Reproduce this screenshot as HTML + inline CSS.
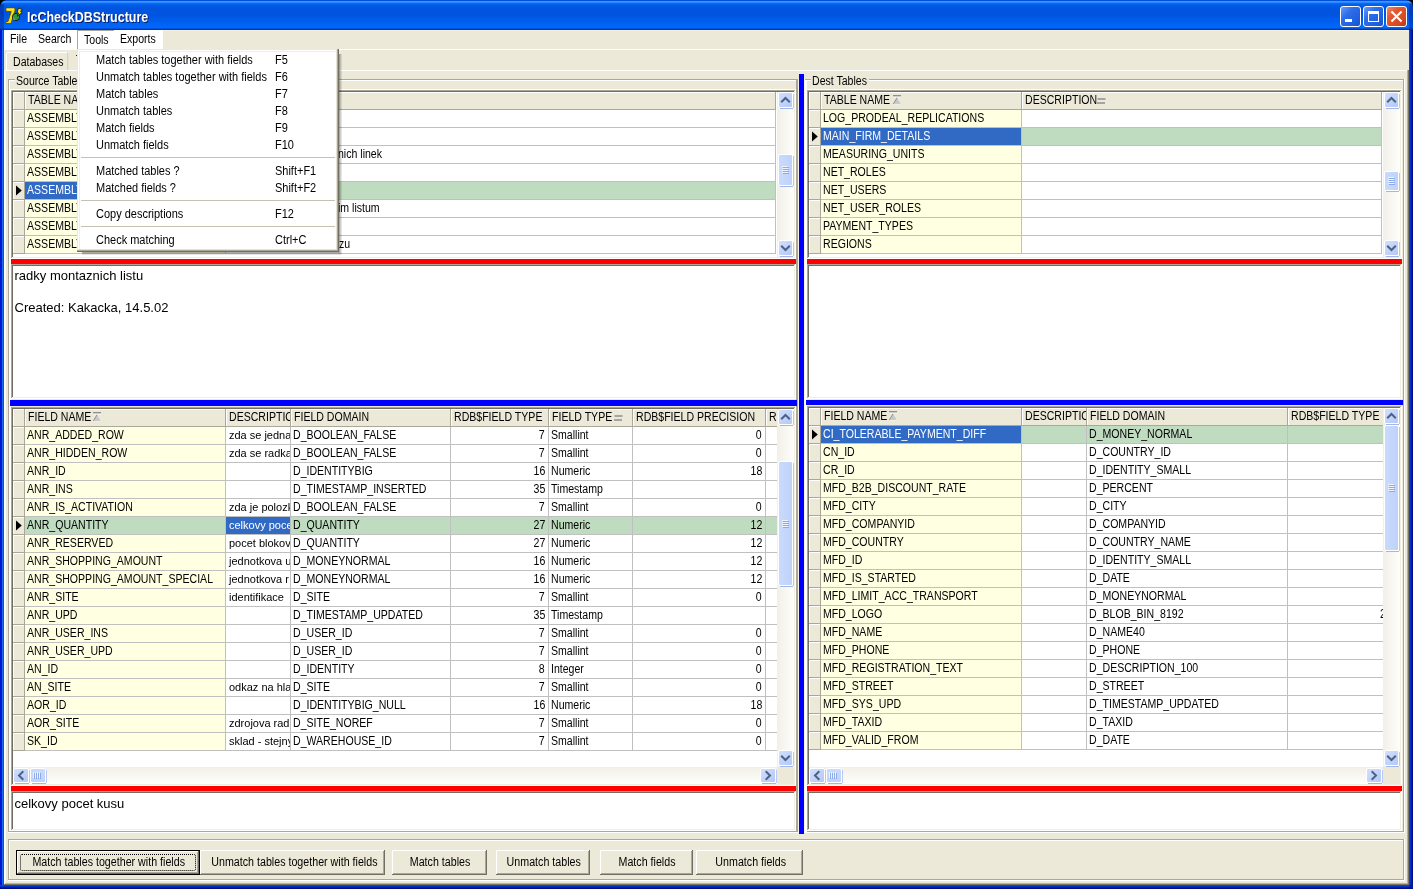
<!DOCTYPE html>
<html><head><meta charset="utf-8"><title>IcCheckDBStructure</title>
<style>
html,body{margin:0;padding:0;width:1413px;height:889px;overflow:hidden;background:#000}
body{position:relative;font-family:"Liberation Sans", sans-serif;}
div{position:absolute;box-sizing:content-box}
svg{position:absolute}
.t{white-space:pre;font-family:"Liberation Sans", sans-serif}
</style></head><body>
<div id="root" style="left:0;top:0;width:1413px;height:889px;will-change:transform">
<div style="left:0px;top:0px;width:1413px;height:10px;background:#000;"></div><div style="left:0;top:0;width:1413px;height:30px;background:linear-gradient(to bottom,#0050DC 0px,#0050DC 1px,#3D95FF 1px,#3D95FF 2px,#2A87FF 2px,#2A87FF 3px,#0A6FF8 3px,#0066F2 4px,#005DE8 5px,#0057E2 7px,#0054DE 9px,#0054DE 14px,#0058E4 17px,#005EEC 21px,#0064F4 24px,#0067FA 27px,#0067FA 28px,#0050E0 28px,#0050E0 29px,#0036C8 29px,#0036C8 30px);border-radius:7px 7px 0 0"></div><div style="left:0px;top:4px;width:4px;height:26px;background:rgba(0,20,120,0.35);"></div><div style="left:1409px;top:4px;width:4px;height:26px;background:rgba(0,20,120,0.35);"></div><div style="left:0px;top:30px;width:3px;height:859px;background:#0018D0;"></div><div style="left:2px;top:30px;width:1px;height:855px;background:#1A6AF0;"></div><div style="left:3px;top:30px;width:1px;height:855px;background:#0055E0;"></div><div style="left:1409px;top:30px;width:4px;height:859px;background:#001EA0;"></div><div style="left:1409px;top:30px;width:1px;height:855px;background:#0045F5;"></div><div style="left:1410px;top:30px;width:1px;height:855px;background:#0030D0;"></div><div style="left:1412px;top:30px;width:1px;height:859px;background:#000E80;"></div><div style="left:0px;top:885px;width:1413px;height:4px;background:#001A9A;"></div><div style="left:0px;top:885px;width:1409px;height:1px;background:#0042F2;"></div><div style="left:0px;top:886px;width:1410px;height:1px;background:#0030D0;"></div><div style="left:0px;top:888px;width:1413px;height:1px;background:#000E80;"></div><div style="left:4px;top:30px;width:1405px;height:855px;background:#ECE9D8;"></div><svg style="position:absolute;left:5px;top:7px" width="19" height="18" viewBox="0 0 19 18">
<path d="M1 1 L10 1 L10 3.5 L6 16.5 L1 16.5 L1 14.5 L3 14.5 L6.2 4.5 L1 4.5 Z" fill="#F2E20A" stroke="#6B4A00" stroke-width="0.9" stroke-linejoin="round"/>
<path d="M1.5 2 L9 2" stroke="#FFF7A0" stroke-width="0.8"/>
<circle cx="11" cy="10" r="3.6" fill="#2F9A3C" stroke="#111" stroke-width="0.9"/>
<path d="M7.6 9.5 L10.5 12.8 L8.8 13.2 Z" fill="#9A9A9A"/>
<path d="M13.5 1 L17.5 2.6 L15.4 4.2 L17 5.6 L12.2 9.2 L13.6 6.2 L12.2 5.2 Z" fill="#F5EA00" stroke="#111" stroke-width="0.8" stroke-linejoin="round"/>
</svg><div class="t" style="left:28px;top:11px;font-size:14px;line-height:14px;color:#0A1E6A;font-weight:bold;transform:scaleX(0.89);transform-origin:0 0;">IcCheckDBStructure</div><div class="t" style="left:27px;top:10px;font-size:14px;line-height:14px;color:#FFFFFF;font-weight:bold;transform:scaleX(0.89);transform-origin:0 0;">IcCheckDBStructure</div><div style="left:1340px;top:6px;width:19px;height:19px;border:1px solid #FFFFFF;border-radius:3px;background:linear-gradient(135deg,#6C9CF8 0%,#2E6EEA 35%,#1F5FDF 75%,#1650C8 100%)"></div><div style="left:1363px;top:6px;width:19px;height:19px;border:1px solid #FFFFFF;border-radius:3px;background:linear-gradient(135deg,#6C9CF8 0%,#2E6EEA 35%,#1F5FDF 75%,#1650C8 100%)"></div><div style="left:1345px;top:19px;width:7px;height:3px;background:#FFFFFF;"></div><div style="left:1368px;top:11px;width:9px;height:7px;border:1px solid #FFF;border-top:3px solid #FFF"></div><div style="left:1386px;top:6px;width:19px;height:19px;border:1px solid #FFFFFF;border-radius:3px;background:linear-gradient(135deg,#F0876A 0%,#E2572F 35%,#D44A22 75%,#B8360F 100%)"></div><svg style="position:absolute;left:1386px;top:6px" width="21" height="21" viewBox="0 0 21 21">
<path d="M6.2 6.2 L14.8 14.8 M14.8 6.2 L6.2 14.8" stroke="#FFFFFF" stroke-width="2.1" stroke-linecap="square"/></svg><div style="left:4px;top:30px;width:159px;height:20px;background:#FFFFFF;"></div><div style="left:4px;top:30px;width:1405px;height:1px;background:#F5F2E2;"></div><div style="left:4px;top:30px;width:159px;height:1px;background:#FFFFFF;"></div><div class="t" style="left:10px;top:33px;font-size:12px;line-height:12px;color:#000;transform:scaleX(0.88);transform-origin:0 0;">File</div><div class="t" style="left:38px;top:33px;font-size:12px;line-height:12px;color:#000;transform:scaleX(0.88);transform-origin:0 0;">Search</div><div style="left:77px;top:30px;width:1px;height:19px;background:#ACA899;"></div><div style="left:77px;top:30px;width:37px;height:1px;background:#ACA899;"></div><div class="t" style="left:84px;top:34px;font-size:12px;line-height:12px;color:#000;transform:scaleX(0.88);transform-origin:0 0;">Tools</div><div class="t" style="left:120px;top:33px;font-size:12px;line-height:12px;color:#000;transform:scaleX(0.88);transform-origin:0 0;">Exports</div><div style="left:4px;top:49px;width:1405px;height:1px;background:#FFFFFF;"></div><div style="left:6px;top:52px;width:62px;height:18px;background:#ECE9D8;"></div><div style="left:7px;top:52px;width:60px;height:1px;background:#FFFFFF;"></div><div style="left:6px;top:53px;width:1px;height:17px;background:#FFFFFF;"></div><div style="left:67px;top:53px;width:1px;height:17px;background:#D6D3C2;"></div><div style="left:68px;top:54px;width:1px;height:16px;background:#E4E1D0;"></div><div class="t" style="left:13px;top:56px;font-size:12px;line-height:12px;color:#000;transform:scaleX(0.88);transform-origin:0 0;">Databases</div><div style="left:76px;top:55px;width:1px;height:1px;background:#222;"></div><div style="left:4px;top:70px;width:1403px;height:1px;background:#FFFFFF;"></div><div style="left:4px;top:70px;width:1px;height:815px;background:#FFFFFF;"></div><div style="left:5px;top:71px;width:1px;height:813px;background:#F8F6EC;"></div><div style="left:1407px;top:70px;width:1px;height:814px;background:#B4B09C;"></div><div style="left:1408px;top:70px;width:1px;height:815px;background:#7C7660;"></div><div style="left:5px;top:883px;width:1403px;height:1px;background:#B4B09C;"></div><div style="left:4px;top:884px;width:1405px;height:1px;background:#7C7660;"></div><div style="left:8px;top:79px;width:789px;height:1px;background:#ACA899;"></div><div style="left:9px;top:80px;width:789px;height:1px;background:#FFFFFF;"></div><div style="left:8px;top:79px;width:1px;height:753px;background:#ACA899;"></div><div style="left:9px;top:80px;width:1px;height:753px;background:#FFFFFF;"></div><div style="left:796px;top:79px;width:1px;height:753px;background:#ACA899;"></div><div style="left:797px;top:79px;width:1px;height:754px;background:#FFFFFF;"></div><div style="left:8px;top:831px;width:789px;height:1px;background:#ACA899;"></div><div style="left:8px;top:832px;width:790px;height:1px;background:#FFFFFF;"></div><div style="left:15px;top:73px;width:70px;height:10px;background:#ECE9D8;"></div><div class="t" style="left:16px;top:75px;font-size:12px;line-height:12px;color:#000;transform:scaleX(0.88);transform-origin:0 0;">Source Tables</div><div style="left:805px;top:79px;width:599px;height:1px;background:#ACA899;"></div><div style="left:806px;top:80px;width:599px;height:1px;background:#FFFFFF;"></div><div style="left:805px;top:79px;width:1px;height:753px;background:#ACA899;"></div><div style="left:806px;top:80px;width:1px;height:753px;background:#FFFFFF;"></div><div style="left:1403px;top:79px;width:1px;height:753px;background:#ACA899;"></div><div style="left:1404px;top:79px;width:1px;height:754px;background:#FFFFFF;"></div><div style="left:805px;top:831px;width:599px;height:1px;background:#ACA899;"></div><div style="left:805px;top:832px;width:600px;height:1px;background:#FFFFFF;"></div><div style="left:811px;top:73px;width:58px;height:10px;background:#ECE9D8;"></div><div class="t" style="left:812px;top:75px;font-size:12px;line-height:12px;color:#000;transform:scaleX(0.88);transform-origin:0 0;">Dest Tables</div><div style="left:10px;top:89px;width:1px;height:742px;background:#FFFFFF;"></div><div style="left:10px;top:89px;width:786px;height:1px;background:#FFFFFF;"></div><div style="left:806px;top:89px;width:596px;height:1px;background:#FFFFFF;"></div><div style="left:797px;top:79px;width:1px;height:753px;background:#ACA899;"></div><div style="left:798px;top:79px;width:1px;height:754px;background:#F6F4E8;"></div><div style="left:804px;top:79px;width:1px;height:754px;background:#F6F4E8;"></div><div style="left:805px;top:80px;width:2px;height:752px;background:#FFFFFF;"></div><div style="left:799px;top:74px;width:5px;height:760px;background:#0000FF;"></div><div style="left:11px;top:259px;width:785px;height:5px;background:#FF0000;"></div><div style="left:807px;top:259px;width:595px;height:5px;background:#FF0000;"></div><div style="left:10px;top:400px;width:787px;height:6px;background:#0000FF;"></div><div style="left:806px;top:400px;width:597px;height:5px;background:#0000FF;"></div><div style="left:11px;top:786px;width:785px;height:5px;background:#FF0000;"></div><div style="left:807px;top:786px;width:595px;height:5px;background:#FF0000;"></div><div style="left:11px;top:90px;width:785px;height:169px;background:#FFFFFF;"></div><div style="left:11px;top:90px;width:784px;height:1px;background:#ACA899;"></div><div style="left:11px;top:90px;width:1px;height:168px;background:#ACA899;"></div><div style="left:12px;top:91px;width:782px;height:1px;background:#716F64;"></div><div style="left:12px;top:91px;width:1px;height:166px;background:#716F64;"></div><div style="left:794px;top:91px;width:1px;height:167px;background:#F1EFE2;"></div><div style="left:12px;top:257px;width:783px;height:1px;background:#F1EFE2;"></div><div style="left:795px;top:90px;width:1px;height:169px;background:#FFFFFF;"></div><div style="left:11px;top:258px;width:785px;height:1px;background:#FFFFFF;"></div><div style="left:13px;top:92px;width:764px;height:165px;overflow:hidden"><div style="left:0px;top:0px;width:12px;height:18px;background:#ECE9D8;"></div><div style="left:0px;top:0px;width:12px;height:1px;background:#FFFFFF;"></div><div style="left:0px;top:0px;width:1px;height:18px;background:#FFFFFF;"></div><div style="left:11px;top:0px;width:1px;height:18px;background:#ACA899;"></div><div style="left:0px;top:17px;width:12px;height:1px;background:#ACA899;"></div><div style="left:12px;top:0px;width:201px;height:18px;background:#ECE9D8;"></div><div style="left:12px;top:0px;width:201px;height:1px;background:#FFFFFF;"></div><div style="left:12px;top:0px;width:1px;height:17px;background:#FFFFFF;"></div><div style="left:212px;top:0px;width:1px;height:18px;background:#ACA899;"></div><div style="left:12px;top:17px;width:201px;height:1px;background:#ACA899;"></div><div style="left:213px;top:0px;width:591px;height:18px;background:#ECE9D8;"></div><div style="left:213px;top:0px;width:591px;height:1px;background:#FFFFFF;"></div><div style="left:213px;top:0px;width:1px;height:17px;background:#FFFFFF;"></div><div style="left:762px;top:0px;width:1px;height:18px;background:#ACA899;"></div><div style="left:763px;top:0px;width:1px;height:18px;background:#FFFFFF;"></div><div style="left:213px;top:17px;width:550px;height:1px;background:#ACA899;"></div><div style="left:12px;top:0px;width:200px;height:17px;overflow:hidden"><div class="t" style="left:2.5px;top:2px;font-size:12px;line-height:12px;color:#000;transform:scaleX(0.88);transform-origin:0 0;">TABLE NAME</div><svg style="position:absolute;left:68px;top:3px" width="9" height="10" viewBox="0 0 9 10"><rect x="0" y="0" width="8" height="1.6" fill="#8E8E8E"/><rect x="0" y="1.6" width="8" height="0.8" fill="#FFFFFF"/><path d="M4 2.8 L7.8 9.2 L0.2 9.2 Z" fill="#C8C8C8"/><path d="M4 2.8 L0.2 9.2" stroke="#888" stroke-width="0.9"/><path d="M0.2 9.4 L7.8 9.4" stroke="#F4F4F4" stroke-width="0.8"/></svg></div><div style="left:213px;top:0px;width:590px;height:17px;overflow:hidden"><div class="t" style="left:2.5px;top:2px;font-size:12px;line-height:12px;color:#000;transform:scaleX(0.88);transform-origin:0 0;">DESCRIPTION</div></div><div style="left:0px;top:18px;width:12px;height:18px;background:#ECE9D8;"></div><div style="left:0px;top:18px;width:11px;height:1px;background:#FFFFFF;"></div><div style="left:0px;top:18px;width:1px;height:17px;background:#FFFFFF;"></div><div style="left:11px;top:18px;width:1px;height:18px;background:#ACA899;"></div><div style="left:0px;top:35px;width:12px;height:1px;background:#ACA899;"></div><div style="left:12px;top:18px;width:200px;height:17px;background:#FFFFE1;"></div><div style="left:12px;top:18px;width:200px;height:17px;overflow:hidden"><div class="t" style="left:2px;top:2px;font-size:12px;line-height:12px;color:#000;transform:scaleX(0.88);transform-origin:0 0;">ASSEMBLY_LINES</div></div><div style="left:213px;top:18px;width:549px;height:17px;background:#FFFFFF;"></div><div style="left:763px;top:18px;width:1px;height:17px;background:#FFFFFF;"></div><div style="left:762px;top:18px;width:1px;height:18px;background:#C0C0C0;"></div><div style="left:12px;top:35px;width:751px;height:1px;background:#C0C0C0;"></div><div style="left:212px;top:18px;width:1px;height:18px;background:#C0C0C0;"></div><div style="left:0px;top:36px;width:12px;height:18px;background:#ECE9D8;"></div><div style="left:0px;top:36px;width:11px;height:1px;background:#FFFFFF;"></div><div style="left:0px;top:36px;width:1px;height:17px;background:#FFFFFF;"></div><div style="left:11px;top:36px;width:1px;height:18px;background:#ACA899;"></div><div style="left:0px;top:53px;width:12px;height:1px;background:#ACA899;"></div><div style="left:12px;top:36px;width:200px;height:17px;background:#FFFFE1;"></div><div style="left:12px;top:36px;width:200px;height:17px;overflow:hidden"><div class="t" style="left:2px;top:2px;font-size:12px;line-height:12px;color:#000;transform:scaleX(0.88);transform-origin:0 0;">ASSEMBLY_LIST</div></div><div style="left:213px;top:36px;width:549px;height:17px;background:#FFFFFF;"></div><div style="left:763px;top:36px;width:1px;height:17px;background:#FFFFFF;"></div><div style="left:762px;top:36px;width:1px;height:18px;background:#C0C0C0;"></div><div style="left:12px;top:53px;width:751px;height:1px;background:#C0C0C0;"></div><div style="left:212px;top:36px;width:1px;height:18px;background:#C0C0C0;"></div><div style="left:0px;top:54px;width:12px;height:18px;background:#ECE9D8;"></div><div style="left:0px;top:54px;width:11px;height:1px;background:#FFFFFF;"></div><div style="left:0px;top:54px;width:1px;height:17px;background:#FFFFFF;"></div><div style="left:11px;top:54px;width:1px;height:18px;background:#ACA899;"></div><div style="left:0px;top:71px;width:12px;height:1px;background:#ACA899;"></div><div style="left:12px;top:54px;width:200px;height:17px;background:#FFFFE1;"></div><div style="left:12px;top:54px;width:200px;height:17px;overflow:hidden"><div class="t" style="left:2px;top:2px;font-size:12px;line-height:12px;color:#000;transform:scaleX(0.88);transform-origin:0 0;">ASSEMBLY_LIST_LINES</div></div><div style="left:213px;top:54px;width:549px;height:17px;background:#FFFFFF;"></div><div style="left:763px;top:54px;width:1px;height:17px;background:#FFFFFF;"></div><div style="left:762px;top:54px;width:1px;height:18px;background:#C0C0C0;"></div><div class="t" style="left:325px;top:56px;font-size:12px;line-height:12px;color:#000;transform:scaleX(0.88);transform-origin:0 0;">nich linek</div><div style="left:12px;top:71px;width:751px;height:1px;background:#C0C0C0;"></div><div style="left:212px;top:54px;width:1px;height:18px;background:#C0C0C0;"></div><div style="left:0px;top:72px;width:12px;height:18px;background:#ECE9D8;"></div><div style="left:0px;top:72px;width:11px;height:1px;background:#FFFFFF;"></div><div style="left:0px;top:72px;width:1px;height:17px;background:#FFFFFF;"></div><div style="left:11px;top:72px;width:1px;height:18px;background:#ACA899;"></div><div style="left:0px;top:89px;width:12px;height:1px;background:#ACA899;"></div><div style="left:12px;top:72px;width:200px;height:17px;background:#FFFFE1;"></div><div style="left:12px;top:72px;width:200px;height:17px;overflow:hidden"><div class="t" style="left:2px;top:2px;font-size:12px;line-height:12px;color:#000;transform:scaleX(0.88);transform-origin:0 0;">ASSEMBLY_LIST_LINES_D</div></div><div style="left:213px;top:72px;width:549px;height:17px;background:#FFFFFF;"></div><div style="left:763px;top:72px;width:1px;height:17px;background:#FFFFFF;"></div><div style="left:762px;top:72px;width:1px;height:18px;background:#C0C0C0;"></div><div style="left:12px;top:89px;width:751px;height:1px;background:#C0C0C0;"></div><div style="left:212px;top:72px;width:1px;height:18px;background:#C0C0C0;"></div><div style="left:0px;top:90px;width:12px;height:18px;background:#ECE9D8;"></div><div style="left:0px;top:90px;width:11px;height:1px;background:#FFFFFF;"></div><div style="left:0px;top:90px;width:1px;height:17px;background:#FFFFFF;"></div><div style="left:11px;top:90px;width:1px;height:18px;background:#ACA899;"></div><div style="left:0px;top:107px;width:12px;height:1px;background:#ACA899;"></div><svg style="position:absolute;left:3px;top:93px" width="7" height="12" viewBox="0 0 7 12"><path d="M0 0.5 L5.8 5.5 L0 10.5 Z" fill="#000"/></svg><div style="left:12px;top:90px;width:200px;height:17px;background:#316AC5;"></div><div style="left:12px;top:90px;width:200px;height:17px;overflow:hidden"><div class="t" style="left:2px;top:2px;font-size:12px;line-height:12px;color:#FFFFFF;transform:scaleX(0.88);transform-origin:0 0;">ASSEMBLY_LIST_ROWS</div></div><div style="left:213px;top:90px;width:549px;height:17px;background:#C0DCC0;"></div><div style="left:763px;top:90px;width:1px;height:17px;background:#FFFFFF;"></div><div style="left:762px;top:90px;width:1px;height:18px;background:#C0C0C0;"></div><div style="left:213px;top:90px;width:590px;height:17px;overflow:hidden"><div class="t" style="left:2px;top:2px;font-size:12px;line-height:12px;color:#000;transform:scaleX(0.88);transform-origin:0 0;">radky montaznich listu</div></div><div style="left:12px;top:107px;width:751px;height:1px;background:#C0C0C0;"></div><div style="left:212px;top:90px;width:1px;height:18px;background:#C0C0C0;"></div><div style="left:0px;top:108px;width:12px;height:18px;background:#ECE9D8;"></div><div style="left:0px;top:108px;width:11px;height:1px;background:#FFFFFF;"></div><div style="left:0px;top:108px;width:1px;height:17px;background:#FFFFFF;"></div><div style="left:11px;top:108px;width:1px;height:18px;background:#ACA899;"></div><div style="left:0px;top:125px;width:12px;height:1px;background:#ACA899;"></div><div style="left:12px;top:108px;width:200px;height:17px;background:#FFFFE1;"></div><div style="left:12px;top:108px;width:200px;height:17px;overflow:hidden"><div class="t" style="left:2px;top:2px;font-size:12px;line-height:12px;color:#000;transform:scaleX(0.88);transform-origin:0 0;">ASSEMBLY_LIST_STATES</div></div><div style="left:213px;top:108px;width:549px;height:17px;background:#FFFFFF;"></div><div style="left:763px;top:108px;width:1px;height:17px;background:#FFFFFF;"></div><div style="left:762px;top:108px;width:1px;height:18px;background:#C0C0C0;"></div><div class="t" style="left:325px;top:110px;font-size:12px;line-height:12px;color:#000;transform:scaleX(0.88);transform-origin:0 0;">im listum</div><div style="left:12px;top:125px;width:751px;height:1px;background:#C0C0C0;"></div><div style="left:212px;top:108px;width:1px;height:18px;background:#C0C0C0;"></div><div style="left:0px;top:126px;width:12px;height:18px;background:#ECE9D8;"></div><div style="left:0px;top:126px;width:11px;height:1px;background:#FFFFFF;"></div><div style="left:0px;top:126px;width:1px;height:17px;background:#FFFFFF;"></div><div style="left:11px;top:126px;width:1px;height:18px;background:#ACA899;"></div><div style="left:0px;top:143px;width:12px;height:1px;background:#ACA899;"></div><div style="left:12px;top:126px;width:200px;height:17px;background:#FFFFE1;"></div><div style="left:12px;top:126px;width:200px;height:17px;overflow:hidden"><div class="t" style="left:2px;top:2px;font-size:12px;line-height:12px;color:#000;transform:scaleX(0.88);transform-origin:0 0;">ASSEMBLY_ORDERS</div></div><div style="left:213px;top:126px;width:549px;height:17px;background:#FFFFFF;"></div><div style="left:763px;top:126px;width:1px;height:17px;background:#FFFFFF;"></div><div style="left:762px;top:126px;width:1px;height:18px;background:#C0C0C0;"></div><div style="left:12px;top:143px;width:751px;height:1px;background:#C0C0C0;"></div><div style="left:212px;top:126px;width:1px;height:18px;background:#C0C0C0;"></div><div style="left:0px;top:144px;width:12px;height:18px;background:#ECE9D8;"></div><div style="left:0px;top:144px;width:11px;height:1px;background:#FFFFFF;"></div><div style="left:0px;top:144px;width:1px;height:17px;background:#FFFFFF;"></div><div style="left:11px;top:144px;width:1px;height:18px;background:#ACA899;"></div><div style="left:0px;top:161px;width:12px;height:1px;background:#ACA899;"></div><div style="left:12px;top:144px;width:200px;height:17px;background:#FFFFE1;"></div><div style="left:12px;top:144px;width:200px;height:17px;overflow:hidden"><div class="t" style="left:2px;top:2px;font-size:12px;line-height:12px;color:#000;transform:scaleX(0.88);transform-origin:0 0;">ASSEMBLY_ORDERS_ROWS</div></div><div style="left:213px;top:144px;width:549px;height:17px;background:#FFFFFF;"></div><div style="left:763px;top:144px;width:1px;height:17px;background:#FFFFFF;"></div><div style="left:762px;top:144px;width:1px;height:18px;background:#C0C0C0;"></div><div class="t" style="left:326px;top:146px;font-size:12px;line-height:12px;color:#000;transform:scaleX(0.88);transform-origin:0 0;">zu</div><div style="left:12px;top:161px;width:751px;height:1px;background:#C0C0C0;"></div><div style="left:212px;top:144px;width:1px;height:18px;background:#C0C0C0;"></div></div><div style="left:777px;top:92px;width:17px;height:165px;background:linear-gradient(90deg,#F1EFE8,#FEFEFB)"></div><div style="left:778px;top:92px;width:13px;height:14px;border:1px solid #FFFFFF;border-radius:2px;background:linear-gradient(135deg,#D3DFFD 0%,#C4D5FB 45%,#B3C8F5 100%)"></div><div style="left:780px;top:108px;width:13px;height:1px;background:#A2B7E8;"></div><div style="left:793px;top:94px;width:1px;height:14px;background:#B9CAF0;"></div><svg style="position:absolute;left:0;top:0;overflow:visible" width="1" height="1"><path d="M781.2 102.3 L785.5 98.0 L789.8 102.3" stroke="#4D6185" stroke-width="2.0" fill="none"/></svg><div style="left:778px;top:240px;width:13px;height:14px;border:1px solid #FFFFFF;border-radius:2px;background:linear-gradient(135deg,#D3DFFD 0%,#C4D5FB 45%,#B3C8F5 100%)"></div><div style="left:780px;top:256px;width:13px;height:1px;background:#A2B7E8;"></div><div style="left:793px;top:242px;width:1px;height:14px;background:#B9CAF0;"></div><svg style="position:absolute;left:0;top:0;overflow:visible" width="1" height="1"><path d="M781.2 245.7 L785.5 250.0 L789.8 245.7" stroke="#4D6185" stroke-width="2.0" fill="none"/></svg><div style="left:778px;top:154px;width:13px;height:30px;border:1px solid #FFFFFF;border-radius:2px;background:linear-gradient(90deg,#CADAFD,#BED2FA)"></div><div style="left:780px;top:186px;width:13px;height:1px;background:#A2B7E8;"></div><div style="left:793px;top:156px;width:1px;height:30px;background:#B9CAF0;"></div><div style="left:782px;top:166px;width:6px;height:1px;background:#EEF3FE;"></div><div style="left:783px;top:167px;width:6px;height:1px;background:#8CA9E8;"></div><div style="left:782px;top:168px;width:6px;height:1px;background:#EEF3FE;"></div><div style="left:783px;top:169px;width:6px;height:1px;background:#8CA9E8;"></div><div style="left:782px;top:170px;width:6px;height:1px;background:#EEF3FE;"></div><div style="left:783px;top:171px;width:6px;height:1px;background:#8CA9E8;"></div><div style="left:782px;top:172px;width:6px;height:1px;background:#EEF3FE;"></div><div style="left:783px;top:173px;width:6px;height:1px;background:#8CA9E8;"></div><div style="left:807px;top:90px;width:595px;height:169px;background:#FFFFFF;"></div><div style="left:807px;top:90px;width:594px;height:1px;background:#ACA899;"></div><div style="left:807px;top:90px;width:1px;height:168px;background:#ACA899;"></div><div style="left:808px;top:91px;width:592px;height:1px;background:#716F64;"></div><div style="left:808px;top:91px;width:1px;height:166px;background:#716F64;"></div><div style="left:1400px;top:91px;width:1px;height:167px;background:#F1EFE2;"></div><div style="left:808px;top:257px;width:593px;height:1px;background:#F1EFE2;"></div><div style="left:1401px;top:90px;width:1px;height:169px;background:#FFFFFF;"></div><div style="left:807px;top:258px;width:595px;height:1px;background:#FFFFFF;"></div><div style="left:809px;top:92px;width:574px;height:165px;overflow:hidden"><div style="left:0px;top:0px;width:12px;height:18px;background:#ECE9D8;"></div><div style="left:0px;top:0px;width:12px;height:1px;background:#FFFFFF;"></div><div style="left:0px;top:0px;width:1px;height:18px;background:#FFFFFF;"></div><div style="left:11px;top:0px;width:1px;height:18px;background:#ACA899;"></div><div style="left:0px;top:17px;width:12px;height:1px;background:#ACA899;"></div><div style="left:12px;top:0px;width:201px;height:18px;background:#ECE9D8;"></div><div style="left:12px;top:0px;width:201px;height:1px;background:#FFFFFF;"></div><div style="left:12px;top:0px;width:1px;height:17px;background:#FFFFFF;"></div><div style="left:212px;top:0px;width:1px;height:18px;background:#ACA899;"></div><div style="left:12px;top:17px;width:201px;height:1px;background:#ACA899;"></div><div style="left:213px;top:0px;width:401px;height:18px;background:#ECE9D8;"></div><div style="left:213px;top:0px;width:401px;height:1px;background:#FFFFFF;"></div><div style="left:213px;top:0px;width:1px;height:17px;background:#FFFFFF;"></div><div style="left:572px;top:0px;width:1px;height:18px;background:#ACA899;"></div><div style="left:573px;top:0px;width:1px;height:18px;background:#FFFFFF;"></div><div style="left:213px;top:17px;width:360px;height:1px;background:#ACA899;"></div><div style="left:12px;top:0px;width:200px;height:17px;overflow:hidden"><div class="t" style="left:2.5px;top:2px;font-size:12px;line-height:12px;color:#000;transform:scaleX(0.88);transform-origin:0 0;">TABLE NAME</div><svg style="position:absolute;left:72px;top:3px" width="9" height="10" viewBox="0 0 9 10"><rect x="0" y="0" width="8" height="1.6" fill="#8E8E8E"/><rect x="0" y="1.6" width="8" height="0.8" fill="#FFFFFF"/><path d="M4 2.8 L7.8 9.2 L0.2 9.2 Z" fill="#C8C8C8"/><path d="M4 2.8 L0.2 9.2" stroke="#888" stroke-width="0.9"/><path d="M0.2 9.4 L7.8 9.4" stroke="#F4F4F4" stroke-width="0.8"/></svg></div><div style="left:213px;top:0px;width:400px;height:17px;overflow:hidden"><div class="t" style="left:2.5px;top:2px;font-size:12px;line-height:12px;color:#000;transform:scaleX(0.88);transform-origin:0 0;">DESCRIPTION</div><svg style="position:absolute;left:75px;top:5px" width="9" height="8" viewBox="0 0 9 8"><rect x="0.5" y="1" width="8" height="2" fill="#A4A4A4"/><rect x="0" y="5" width="8" height="2" fill="#A4A4A4"/></svg></div><div style="left:0px;top:18px;width:12px;height:18px;background:#ECE9D8;"></div><div style="left:0px;top:18px;width:11px;height:1px;background:#FFFFFF;"></div><div style="left:0px;top:18px;width:1px;height:17px;background:#FFFFFF;"></div><div style="left:11px;top:18px;width:1px;height:18px;background:#ACA899;"></div><div style="left:0px;top:35px;width:12px;height:1px;background:#ACA899;"></div><div style="left:12px;top:18px;width:200px;height:17px;background:#FFFFE1;"></div><div style="left:12px;top:18px;width:200px;height:17px;overflow:hidden"><div class="t" style="left:2px;top:2px;font-size:12px;line-height:12px;color:#000;transform:scaleX(0.88);transform-origin:0 0;">LOG_PRODEAL_REPLICATIONS</div></div><div style="left:213px;top:18px;width:359px;height:17px;background:#FFFFFF;"></div><div style="left:573px;top:18px;width:1px;height:17px;background:#FFFFFF;"></div><div style="left:572px;top:18px;width:1px;height:18px;background:#C0C0C0;"></div><div style="left:12px;top:35px;width:561px;height:1px;background:#C0C0C0;"></div><div style="left:212px;top:18px;width:1px;height:18px;background:#C0C0C0;"></div><div style="left:0px;top:36px;width:12px;height:18px;background:#ECE9D8;"></div><div style="left:0px;top:36px;width:11px;height:1px;background:#FFFFFF;"></div><div style="left:0px;top:36px;width:1px;height:17px;background:#FFFFFF;"></div><div style="left:11px;top:36px;width:1px;height:18px;background:#ACA899;"></div><div style="left:0px;top:53px;width:12px;height:1px;background:#ACA899;"></div><svg style="position:absolute;left:3px;top:39px" width="7" height="12" viewBox="0 0 7 12"><path d="M0 0.5 L5.8 5.5 L0 10.5 Z" fill="#000"/></svg><div style="left:12px;top:36px;width:200px;height:17px;background:#316AC5;"></div><div style="left:12px;top:36px;width:200px;height:17px;overflow:hidden"><div class="t" style="left:2px;top:2px;font-size:12px;line-height:12px;color:#FFFFFF;transform:scaleX(0.88);transform-origin:0 0;">MAIN_FIRM_DETAILS</div></div><div style="left:213px;top:36px;width:359px;height:17px;background:#C0DCC0;"></div><div style="left:573px;top:36px;width:1px;height:17px;background:#FFFFFF;"></div><div style="left:572px;top:36px;width:1px;height:18px;background:#C0C0C0;"></div><div style="left:12px;top:53px;width:561px;height:1px;background:#C0C0C0;"></div><div style="left:212px;top:36px;width:1px;height:18px;background:#C0C0C0;"></div><div style="left:0px;top:54px;width:12px;height:18px;background:#ECE9D8;"></div><div style="left:0px;top:54px;width:11px;height:1px;background:#FFFFFF;"></div><div style="left:0px;top:54px;width:1px;height:17px;background:#FFFFFF;"></div><div style="left:11px;top:54px;width:1px;height:18px;background:#ACA899;"></div><div style="left:0px;top:71px;width:12px;height:1px;background:#ACA899;"></div><div style="left:12px;top:54px;width:200px;height:17px;background:#FFFFE1;"></div><div style="left:12px;top:54px;width:200px;height:17px;overflow:hidden"><div class="t" style="left:2px;top:2px;font-size:12px;line-height:12px;color:#000;transform:scaleX(0.88);transform-origin:0 0;">MEASURING_UNITS</div></div><div style="left:213px;top:54px;width:359px;height:17px;background:#FFFFFF;"></div><div style="left:573px;top:54px;width:1px;height:17px;background:#FFFFFF;"></div><div style="left:572px;top:54px;width:1px;height:18px;background:#C0C0C0;"></div><div style="left:12px;top:71px;width:561px;height:1px;background:#C0C0C0;"></div><div style="left:212px;top:54px;width:1px;height:18px;background:#C0C0C0;"></div><div style="left:0px;top:72px;width:12px;height:18px;background:#ECE9D8;"></div><div style="left:0px;top:72px;width:11px;height:1px;background:#FFFFFF;"></div><div style="left:0px;top:72px;width:1px;height:17px;background:#FFFFFF;"></div><div style="left:11px;top:72px;width:1px;height:18px;background:#ACA899;"></div><div style="left:0px;top:89px;width:12px;height:1px;background:#ACA899;"></div><div style="left:12px;top:72px;width:200px;height:17px;background:#FFFFE1;"></div><div style="left:12px;top:72px;width:200px;height:17px;overflow:hidden"><div class="t" style="left:2px;top:2px;font-size:12px;line-height:12px;color:#000;transform:scaleX(0.88);transform-origin:0 0;">NET_ROLES</div></div><div style="left:213px;top:72px;width:359px;height:17px;background:#FFFFFF;"></div><div style="left:573px;top:72px;width:1px;height:17px;background:#FFFFFF;"></div><div style="left:572px;top:72px;width:1px;height:18px;background:#C0C0C0;"></div><div style="left:12px;top:89px;width:561px;height:1px;background:#C0C0C0;"></div><div style="left:212px;top:72px;width:1px;height:18px;background:#C0C0C0;"></div><div style="left:0px;top:90px;width:12px;height:18px;background:#ECE9D8;"></div><div style="left:0px;top:90px;width:11px;height:1px;background:#FFFFFF;"></div><div style="left:0px;top:90px;width:1px;height:17px;background:#FFFFFF;"></div><div style="left:11px;top:90px;width:1px;height:18px;background:#ACA899;"></div><div style="left:0px;top:107px;width:12px;height:1px;background:#ACA899;"></div><div style="left:12px;top:90px;width:200px;height:17px;background:#FFFFE1;"></div><div style="left:12px;top:90px;width:200px;height:17px;overflow:hidden"><div class="t" style="left:2px;top:2px;font-size:12px;line-height:12px;color:#000;transform:scaleX(0.88);transform-origin:0 0;">NET_USERS</div></div><div style="left:213px;top:90px;width:359px;height:17px;background:#FFFFFF;"></div><div style="left:573px;top:90px;width:1px;height:17px;background:#FFFFFF;"></div><div style="left:572px;top:90px;width:1px;height:18px;background:#C0C0C0;"></div><div style="left:12px;top:107px;width:561px;height:1px;background:#C0C0C0;"></div><div style="left:212px;top:90px;width:1px;height:18px;background:#C0C0C0;"></div><div style="left:0px;top:108px;width:12px;height:18px;background:#ECE9D8;"></div><div style="left:0px;top:108px;width:11px;height:1px;background:#FFFFFF;"></div><div style="left:0px;top:108px;width:1px;height:17px;background:#FFFFFF;"></div><div style="left:11px;top:108px;width:1px;height:18px;background:#ACA899;"></div><div style="left:0px;top:125px;width:12px;height:1px;background:#ACA899;"></div><div style="left:12px;top:108px;width:200px;height:17px;background:#FFFFE1;"></div><div style="left:12px;top:108px;width:200px;height:17px;overflow:hidden"><div class="t" style="left:2px;top:2px;font-size:12px;line-height:12px;color:#000;transform:scaleX(0.88);transform-origin:0 0;">NET_USER_ROLES</div></div><div style="left:213px;top:108px;width:359px;height:17px;background:#FFFFFF;"></div><div style="left:573px;top:108px;width:1px;height:17px;background:#FFFFFF;"></div><div style="left:572px;top:108px;width:1px;height:18px;background:#C0C0C0;"></div><div style="left:12px;top:125px;width:561px;height:1px;background:#C0C0C0;"></div><div style="left:212px;top:108px;width:1px;height:18px;background:#C0C0C0;"></div><div style="left:0px;top:126px;width:12px;height:18px;background:#ECE9D8;"></div><div style="left:0px;top:126px;width:11px;height:1px;background:#FFFFFF;"></div><div style="left:0px;top:126px;width:1px;height:17px;background:#FFFFFF;"></div><div style="left:11px;top:126px;width:1px;height:18px;background:#ACA899;"></div><div style="left:0px;top:143px;width:12px;height:1px;background:#ACA899;"></div><div style="left:12px;top:126px;width:200px;height:17px;background:#FFFFE1;"></div><div style="left:12px;top:126px;width:200px;height:17px;overflow:hidden"><div class="t" style="left:2px;top:2px;font-size:12px;line-height:12px;color:#000;transform:scaleX(0.88);transform-origin:0 0;">PAYMENT_TYPES</div></div><div style="left:213px;top:126px;width:359px;height:17px;background:#FFFFFF;"></div><div style="left:573px;top:126px;width:1px;height:17px;background:#FFFFFF;"></div><div style="left:572px;top:126px;width:1px;height:18px;background:#C0C0C0;"></div><div style="left:12px;top:143px;width:561px;height:1px;background:#C0C0C0;"></div><div style="left:212px;top:126px;width:1px;height:18px;background:#C0C0C0;"></div><div style="left:0px;top:144px;width:12px;height:18px;background:#ECE9D8;"></div><div style="left:0px;top:144px;width:11px;height:1px;background:#FFFFFF;"></div><div style="left:0px;top:144px;width:1px;height:17px;background:#FFFFFF;"></div><div style="left:11px;top:144px;width:1px;height:18px;background:#ACA899;"></div><div style="left:0px;top:161px;width:12px;height:1px;background:#ACA899;"></div><div style="left:12px;top:144px;width:200px;height:17px;background:#FFFFE1;"></div><div style="left:12px;top:144px;width:200px;height:17px;overflow:hidden"><div class="t" style="left:2px;top:2px;font-size:12px;line-height:12px;color:#000;transform:scaleX(0.88);transform-origin:0 0;">REGIONS</div></div><div style="left:213px;top:144px;width:359px;height:17px;background:#FFFFFF;"></div><div style="left:573px;top:144px;width:1px;height:17px;background:#FFFFFF;"></div><div style="left:572px;top:144px;width:1px;height:18px;background:#C0C0C0;"></div><div style="left:12px;top:161px;width:561px;height:1px;background:#C0C0C0;"></div><div style="left:212px;top:144px;width:1px;height:18px;background:#C0C0C0;"></div></div><div style="left:1383px;top:92px;width:17px;height:165px;background:linear-gradient(90deg,#F1EFE8,#FEFEFB)"></div><div style="left:1384px;top:92px;width:13px;height:14px;border:1px solid #FFFFFF;border-radius:2px;background:linear-gradient(135deg,#D3DFFD 0%,#C4D5FB 45%,#B3C8F5 100%)"></div><div style="left:1386px;top:108px;width:13px;height:1px;background:#A2B7E8;"></div><div style="left:1399px;top:94px;width:1px;height:14px;background:#B9CAF0;"></div><svg style="position:absolute;left:0;top:0;overflow:visible" width="1" height="1"><path d="M1387.2 102.3 L1391.5 98.0 L1395.8 102.3" stroke="#4D6185" stroke-width="2.0" fill="none"/></svg><div style="left:1384px;top:240px;width:13px;height:14px;border:1px solid #FFFFFF;border-radius:2px;background:linear-gradient(135deg,#D3DFFD 0%,#C4D5FB 45%,#B3C8F5 100%)"></div><div style="left:1386px;top:256px;width:13px;height:1px;background:#A2B7E8;"></div><div style="left:1399px;top:242px;width:1px;height:14px;background:#B9CAF0;"></div><svg style="position:absolute;left:0;top:0;overflow:visible" width="1" height="1"><path d="M1387.2 245.7 L1391.5 250.0 L1395.8 245.7" stroke="#4D6185" stroke-width="2.0" fill="none"/></svg><div style="left:1384px;top:171px;width:13px;height:18px;border:1px solid #FFFFFF;border-radius:2px;background:linear-gradient(90deg,#CADAFD,#BED2FA)"></div><div style="left:1386px;top:191px;width:13px;height:1px;background:#A2B7E8;"></div><div style="left:1399px;top:173px;width:1px;height:18px;background:#B9CAF0;"></div><div style="left:1388px;top:177px;width:6px;height:1px;background:#EEF3FE;"></div><div style="left:1389px;top:178px;width:6px;height:1px;background:#8CA9E8;"></div><div style="left:1388px;top:179px;width:6px;height:1px;background:#EEF3FE;"></div><div style="left:1389px;top:180px;width:6px;height:1px;background:#8CA9E8;"></div><div style="left:1388px;top:181px;width:6px;height:1px;background:#EEF3FE;"></div><div style="left:1389px;top:182px;width:6px;height:1px;background:#8CA9E8;"></div><div style="left:1388px;top:183px;width:6px;height:1px;background:#EEF3FE;"></div><div style="left:1389px;top:184px;width:6px;height:1px;background:#8CA9E8;"></div><div style="left:11px;top:264px;width:785px;height:135px;background:#FFFFFF;"></div><div style="left:11px;top:264px;width:784px;height:1px;background:#ACA899;"></div><div style="left:11px;top:264px;width:1px;height:134px;background:#ACA899;"></div><div style="left:12px;top:265px;width:782px;height:1px;background:#716F64;"></div><div style="left:12px;top:265px;width:1px;height:132px;background:#716F64;"></div><div style="left:794px;top:265px;width:1px;height:133px;background:#F1EFE2;"></div><div style="left:12px;top:397px;width:783px;height:1px;background:#F1EFE2;"></div><div style="left:795px;top:264px;width:1px;height:135px;background:#FFFFFF;"></div><div style="left:11px;top:398px;width:785px;height:1px;background:#FFFFFF;"></div><div class="t" style="left:14.5px;top:269px;font-size:13px;line-height:13px;color:#000;">radky montaznich listu</div><div class="t" style="left:14.5px;top:301px;font-size:13px;line-height:13px;color:#000;">Created: Kakacka, 14.5.02</div><div style="left:807px;top:264px;width:595px;height:135px;background:#FFFFFF;"></div><div style="left:807px;top:264px;width:594px;height:1px;background:#ACA899;"></div><div style="left:807px;top:264px;width:1px;height:134px;background:#ACA899;"></div><div style="left:808px;top:265px;width:592px;height:1px;background:#716F64;"></div><div style="left:808px;top:265px;width:1px;height:132px;background:#716F64;"></div><div style="left:1400px;top:265px;width:1px;height:133px;background:#F1EFE2;"></div><div style="left:808px;top:397px;width:593px;height:1px;background:#F1EFE2;"></div><div style="left:1401px;top:264px;width:1px;height:135px;background:#FFFFFF;"></div><div style="left:807px;top:398px;width:595px;height:1px;background:#FFFFFF;"></div><div style="left:11px;top:407px;width:785px;height:379px;background:#FFFFFF;"></div><div style="left:11px;top:407px;width:784px;height:1px;background:#ACA899;"></div><div style="left:11px;top:407px;width:1px;height:378px;background:#ACA899;"></div><div style="left:12px;top:408px;width:782px;height:1px;background:#716F64;"></div><div style="left:12px;top:408px;width:1px;height:376px;background:#716F64;"></div><div style="left:794px;top:408px;width:1px;height:377px;background:#F1EFE2;"></div><div style="left:12px;top:784px;width:783px;height:1px;background:#F1EFE2;"></div><div style="left:795px;top:407px;width:1px;height:379px;background:#FFFFFF;"></div><div style="left:11px;top:785px;width:785px;height:1px;background:#FFFFFF;"></div><div style="left:13px;top:409px;width:764px;height:358px;overflow:hidden"><div style="left:0px;top:0px;width:12px;height:18px;background:#ECE9D8;"></div><div style="left:0px;top:0px;width:12px;height:1px;background:#FFFFFF;"></div><div style="left:0px;top:0px;width:1px;height:18px;background:#FFFFFF;"></div><div style="left:11px;top:0px;width:1px;height:18px;background:#ACA899;"></div><div style="left:0px;top:17px;width:12px;height:1px;background:#ACA899;"></div><div style="left:12px;top:0px;width:201px;height:18px;background:#ECE9D8;"></div><div style="left:12px;top:0px;width:201px;height:1px;background:#FFFFFF;"></div><div style="left:12px;top:0px;width:1px;height:17px;background:#FFFFFF;"></div><div style="left:212px;top:0px;width:1px;height:18px;background:#ACA899;"></div><div style="left:12px;top:17px;width:201px;height:1px;background:#ACA899;"></div><div style="left:213px;top:0px;width:65px;height:18px;background:#ECE9D8;"></div><div style="left:213px;top:0px;width:65px;height:1px;background:#FFFFFF;"></div><div style="left:213px;top:0px;width:1px;height:17px;background:#FFFFFF;"></div><div style="left:277px;top:0px;width:1px;height:18px;background:#ACA899;"></div><div style="left:213px;top:17px;width:65px;height:1px;background:#ACA899;"></div><div style="left:278px;top:0px;width:160px;height:18px;background:#ECE9D8;"></div><div style="left:278px;top:0px;width:160px;height:1px;background:#FFFFFF;"></div><div style="left:278px;top:0px;width:1px;height:17px;background:#FFFFFF;"></div><div style="left:437px;top:0px;width:1px;height:18px;background:#ACA899;"></div><div style="left:278px;top:17px;width:160px;height:1px;background:#ACA899;"></div><div style="left:438px;top:0px;width:98px;height:18px;background:#ECE9D8;"></div><div style="left:438px;top:0px;width:98px;height:1px;background:#FFFFFF;"></div><div style="left:438px;top:0px;width:1px;height:17px;background:#FFFFFF;"></div><div style="left:535px;top:0px;width:1px;height:18px;background:#ACA899;"></div><div style="left:438px;top:17px;width:98px;height:1px;background:#ACA899;"></div><div style="left:536px;top:0px;width:84px;height:18px;background:#ECE9D8;"></div><div style="left:536px;top:0px;width:84px;height:1px;background:#FFFFFF;"></div><div style="left:536px;top:0px;width:1px;height:17px;background:#FFFFFF;"></div><div style="left:619px;top:0px;width:1px;height:18px;background:#ACA899;"></div><div style="left:536px;top:17px;width:84px;height:1px;background:#ACA899;"></div><div style="left:620px;top:0px;width:133px;height:18px;background:#ECE9D8;"></div><div style="left:620px;top:0px;width:133px;height:1px;background:#FFFFFF;"></div><div style="left:620px;top:0px;width:1px;height:17px;background:#FFFFFF;"></div><div style="left:752px;top:0px;width:1px;height:18px;background:#ACA899;"></div><div style="left:620px;top:17px;width:133px;height:1px;background:#ACA899;"></div><div style="left:753px;top:0px;width:51px;height:18px;background:#ECE9D8;"></div><div style="left:753px;top:0px;width:51px;height:1px;background:#FFFFFF;"></div><div style="left:753px;top:0px;width:1px;height:17px;background:#FFFFFF;"></div><div style="left:753px;top:17px;width:51px;height:1px;background:#ACA899;"></div><div style="left:12px;top:0px;width:200px;height:17px;overflow:hidden"><div class="t" style="left:2.5px;top:2px;font-size:12px;line-height:12px;color:#000;transform:scaleX(0.88);transform-origin:0 0;">FIELD NAME</div><svg style="position:absolute;left:68px;top:3px" width="9" height="10" viewBox="0 0 9 10"><rect x="0" y="0" width="8" height="1.6" fill="#8E8E8E"/><rect x="0" y="1.6" width="8" height="0.8" fill="#FFFFFF"/><path d="M4 2.8 L7.8 9.2 L0.2 9.2 Z" fill="#C8C8C8"/><path d="M4 2.8 L0.2 9.2" stroke="#888" stroke-width="0.9"/><path d="M0.2 9.4 L7.8 9.4" stroke="#F4F4F4" stroke-width="0.8"/></svg></div><div style="left:213px;top:0px;width:64px;height:17px;overflow:hidden"><div class="t" style="left:2.5px;top:2px;font-size:12px;line-height:12px;color:#000;transform:scaleX(0.88);transform-origin:0 0;">DESCRIPTION</div></div><div style="left:278px;top:0px;width:159px;height:17px;overflow:hidden"><div class="t" style="left:2.5px;top:2px;font-size:12px;line-height:12px;color:#000;transform:scaleX(0.88);transform-origin:0 0;">FIELD DOMAIN</div></div><div style="left:438px;top:0px;width:97px;height:17px;overflow:hidden"><div class="t" style="left:2.5px;top:2px;font-size:12px;line-height:12px;color:#000;transform:scaleX(0.88);transform-origin:0 0;">RDB$FIELD TYPE</div></div><div style="left:536px;top:0px;width:83px;height:17px;overflow:hidden"><div class="t" style="left:2.5px;top:2px;font-size:12px;line-height:12px;color:#000;transform:scaleX(0.88);transform-origin:0 0;">FIELD TYPE</div><svg style="position:absolute;left:65px;top:5px" width="9" height="8" viewBox="0 0 9 8"><rect x="0.5" y="1" width="8" height="2" fill="#A4A4A4"/><rect x="0" y="5" width="8" height="2" fill="#A4A4A4"/></svg></div><div style="left:620px;top:0px;width:132px;height:17px;overflow:hidden"><div class="t" style="left:2.5px;top:2px;font-size:12px;line-height:12px;color:#000;transform:scaleX(0.88);transform-origin:0 0;">RDB$FIELD PRECISION</div></div><div style="left:753px;top:0px;width:50px;height:17px;overflow:hidden"><div class="t" style="left:2.5px;top:2px;font-size:12px;line-height:12px;color:#000;transform:scaleX(0.88);transform-origin:0 0;">R</div></div><div style="left:0px;top:18px;width:12px;height:18px;background:#ECE9D8;"></div><div style="left:0px;top:18px;width:11px;height:1px;background:#FFFFFF;"></div><div style="left:0px;top:18px;width:1px;height:17px;background:#FFFFFF;"></div><div style="left:11px;top:18px;width:1px;height:18px;background:#ACA899;"></div><div style="left:0px;top:35px;width:12px;height:1px;background:#ACA899;"></div><div style="left:12px;top:18px;width:200px;height:17px;background:#FFFFE1;"></div><div style="left:12px;top:18px;width:200px;height:17px;overflow:hidden"><div class="t" style="left:2px;top:2px;font-size:12px;line-height:12px;color:#000;transform:scaleX(0.88);transform-origin:0 0;">ANR_ADDED_ROW</div></div><div style="left:213px;top:18px;width:64px;height:17px;background:#FFFFFF;"></div><div style="left:213px;top:18px;width:64px;height:17px;overflow:hidden"><div class="t" style="left:2.7px;top:3px;font-size:11px;line-height:11px;color:#000;transform:scaleX(0.999);transform-origin:0 0;">zda se jedna o pridany radek</div></div><div style="left:278px;top:18px;width:159px;height:17px;background:#FFFFFF;"></div><div style="left:278px;top:18px;width:159px;height:17px;overflow:hidden"><div class="t" style="left:2px;top:2px;font-size:12px;line-height:12px;color:#000;transform:scaleX(0.88);transform-origin:0 0;">D_BOOLEAN_FALSE</div></div><div style="left:438px;top:18px;width:97px;height:17px;background:#FFFFFF;"></div><div style="left:438px;top:18px;width:97px;height:17px;overflow:hidden"><div class="t" style="right:3px;top:2px;font-size:12px;line-height:12px;color:#000;transform:scaleX(0.88);transform-origin:100% 0">7</div></div><div style="left:536px;top:18px;width:83px;height:17px;background:#FFFFFF;"></div><div style="left:536px;top:18px;width:83px;height:17px;overflow:hidden"><div class="t" style="left:2px;top:2px;font-size:12px;line-height:12px;color:#000;transform:scaleX(0.88);transform-origin:0 0;">Smallint</div></div><div style="left:620px;top:18px;width:132px;height:17px;background:#FFFFFF;"></div><div style="left:620px;top:18px;width:132px;height:17px;overflow:hidden"><div class="t" style="right:3px;top:2px;font-size:12px;line-height:12px;color:#000;transform:scaleX(0.88);transform-origin:100% 0">0</div></div><div style="left:753px;top:18px;width:11px;height:17px;background:#FFFFFF;"></div><div style="left:12px;top:35px;width:752px;height:1px;background:#C0C0C0;"></div><div style="left:212px;top:18px;width:1px;height:18px;background:#C0C0C0;"></div><div style="left:277px;top:18px;width:1px;height:18px;background:#C0C0C0;"></div><div style="left:437px;top:18px;width:1px;height:18px;background:#C0C0C0;"></div><div style="left:535px;top:18px;width:1px;height:18px;background:#C0C0C0;"></div><div style="left:619px;top:18px;width:1px;height:18px;background:#C0C0C0;"></div><div style="left:752px;top:18px;width:1px;height:18px;background:#C0C0C0;"></div><div style="left:0px;top:36px;width:12px;height:18px;background:#ECE9D8;"></div><div style="left:0px;top:36px;width:11px;height:1px;background:#FFFFFF;"></div><div style="left:0px;top:36px;width:1px;height:17px;background:#FFFFFF;"></div><div style="left:11px;top:36px;width:1px;height:18px;background:#ACA899;"></div><div style="left:0px;top:53px;width:12px;height:1px;background:#ACA899;"></div><div style="left:12px;top:36px;width:200px;height:17px;background:#FFFFE1;"></div><div style="left:12px;top:36px;width:200px;height:17px;overflow:hidden"><div class="t" style="left:2px;top:2px;font-size:12px;line-height:12px;color:#000;transform:scaleX(0.88);transform-origin:0 0;">ANR_HIDDEN_ROW</div></div><div style="left:213px;top:36px;width:64px;height:17px;background:#FFFFFF;"></div><div style="left:213px;top:36px;width:64px;height:17px;overflow:hidden"><div class="t" style="left:2.7px;top:3px;font-size:11px;line-height:11px;color:#000;transform:scaleX(0.999);transform-origin:0 0;">zda se radka nezobrazuje</div></div><div style="left:278px;top:36px;width:159px;height:17px;background:#FFFFFF;"></div><div style="left:278px;top:36px;width:159px;height:17px;overflow:hidden"><div class="t" style="left:2px;top:2px;font-size:12px;line-height:12px;color:#000;transform:scaleX(0.88);transform-origin:0 0;">D_BOOLEAN_FALSE</div></div><div style="left:438px;top:36px;width:97px;height:17px;background:#FFFFFF;"></div><div style="left:438px;top:36px;width:97px;height:17px;overflow:hidden"><div class="t" style="right:3px;top:2px;font-size:12px;line-height:12px;color:#000;transform:scaleX(0.88);transform-origin:100% 0">7</div></div><div style="left:536px;top:36px;width:83px;height:17px;background:#FFFFFF;"></div><div style="left:536px;top:36px;width:83px;height:17px;overflow:hidden"><div class="t" style="left:2px;top:2px;font-size:12px;line-height:12px;color:#000;transform:scaleX(0.88);transform-origin:0 0;">Smallint</div></div><div style="left:620px;top:36px;width:132px;height:17px;background:#FFFFFF;"></div><div style="left:620px;top:36px;width:132px;height:17px;overflow:hidden"><div class="t" style="right:3px;top:2px;font-size:12px;line-height:12px;color:#000;transform:scaleX(0.88);transform-origin:100% 0">0</div></div><div style="left:753px;top:36px;width:11px;height:17px;background:#FFFFFF;"></div><div style="left:12px;top:53px;width:752px;height:1px;background:#C0C0C0;"></div><div style="left:212px;top:36px;width:1px;height:18px;background:#C0C0C0;"></div><div style="left:277px;top:36px;width:1px;height:18px;background:#C0C0C0;"></div><div style="left:437px;top:36px;width:1px;height:18px;background:#C0C0C0;"></div><div style="left:535px;top:36px;width:1px;height:18px;background:#C0C0C0;"></div><div style="left:619px;top:36px;width:1px;height:18px;background:#C0C0C0;"></div><div style="left:752px;top:36px;width:1px;height:18px;background:#C0C0C0;"></div><div style="left:0px;top:54px;width:12px;height:18px;background:#ECE9D8;"></div><div style="left:0px;top:54px;width:11px;height:1px;background:#FFFFFF;"></div><div style="left:0px;top:54px;width:1px;height:17px;background:#FFFFFF;"></div><div style="left:11px;top:54px;width:1px;height:18px;background:#ACA899;"></div><div style="left:0px;top:71px;width:12px;height:1px;background:#ACA899;"></div><div style="left:12px;top:54px;width:200px;height:17px;background:#FFFFE1;"></div><div style="left:12px;top:54px;width:200px;height:17px;overflow:hidden"><div class="t" style="left:2px;top:2px;font-size:12px;line-height:12px;color:#000;transform:scaleX(0.88);transform-origin:0 0;">ANR_ID</div></div><div style="left:213px;top:54px;width:64px;height:17px;background:#FFFFFF;"></div><div style="left:278px;top:54px;width:159px;height:17px;background:#FFFFFF;"></div><div style="left:278px;top:54px;width:159px;height:17px;overflow:hidden"><div class="t" style="left:2px;top:2px;font-size:12px;line-height:12px;color:#000;transform:scaleX(0.88);transform-origin:0 0;">D_IDENTITYBIG</div></div><div style="left:438px;top:54px;width:97px;height:17px;background:#FFFFFF;"></div><div style="left:438px;top:54px;width:97px;height:17px;overflow:hidden"><div class="t" style="right:3px;top:2px;font-size:12px;line-height:12px;color:#000;transform:scaleX(0.88);transform-origin:100% 0">16</div></div><div style="left:536px;top:54px;width:83px;height:17px;background:#FFFFFF;"></div><div style="left:536px;top:54px;width:83px;height:17px;overflow:hidden"><div class="t" style="left:2px;top:2px;font-size:12px;line-height:12px;color:#000;transform:scaleX(0.88);transform-origin:0 0;">Numeric</div></div><div style="left:620px;top:54px;width:132px;height:17px;background:#FFFFFF;"></div><div style="left:620px;top:54px;width:132px;height:17px;overflow:hidden"><div class="t" style="right:3px;top:2px;font-size:12px;line-height:12px;color:#000;transform:scaleX(0.88);transform-origin:100% 0">18</div></div><div style="left:753px;top:54px;width:11px;height:17px;background:#FFFFFF;"></div><div style="left:12px;top:71px;width:752px;height:1px;background:#C0C0C0;"></div><div style="left:212px;top:54px;width:1px;height:18px;background:#C0C0C0;"></div><div style="left:277px;top:54px;width:1px;height:18px;background:#C0C0C0;"></div><div style="left:437px;top:54px;width:1px;height:18px;background:#C0C0C0;"></div><div style="left:535px;top:54px;width:1px;height:18px;background:#C0C0C0;"></div><div style="left:619px;top:54px;width:1px;height:18px;background:#C0C0C0;"></div><div style="left:752px;top:54px;width:1px;height:18px;background:#C0C0C0;"></div><div style="left:0px;top:72px;width:12px;height:18px;background:#ECE9D8;"></div><div style="left:0px;top:72px;width:11px;height:1px;background:#FFFFFF;"></div><div style="left:0px;top:72px;width:1px;height:17px;background:#FFFFFF;"></div><div style="left:11px;top:72px;width:1px;height:18px;background:#ACA899;"></div><div style="left:0px;top:89px;width:12px;height:1px;background:#ACA899;"></div><div style="left:12px;top:72px;width:200px;height:17px;background:#FFFFE1;"></div><div style="left:12px;top:72px;width:200px;height:17px;overflow:hidden"><div class="t" style="left:2px;top:2px;font-size:12px;line-height:12px;color:#000;transform:scaleX(0.88);transform-origin:0 0;">ANR_INS</div></div><div style="left:213px;top:72px;width:64px;height:17px;background:#FFFFFF;"></div><div style="left:278px;top:72px;width:159px;height:17px;background:#FFFFFF;"></div><div style="left:278px;top:72px;width:159px;height:17px;overflow:hidden"><div class="t" style="left:2px;top:2px;font-size:12px;line-height:12px;color:#000;transform:scaleX(0.88);transform-origin:0 0;">D_TIMESTAMP_INSERTED</div></div><div style="left:438px;top:72px;width:97px;height:17px;background:#FFFFFF;"></div><div style="left:438px;top:72px;width:97px;height:17px;overflow:hidden"><div class="t" style="right:3px;top:2px;font-size:12px;line-height:12px;color:#000;transform:scaleX(0.88);transform-origin:100% 0">35</div></div><div style="left:536px;top:72px;width:83px;height:17px;background:#FFFFFF;"></div><div style="left:536px;top:72px;width:83px;height:17px;overflow:hidden"><div class="t" style="left:2px;top:2px;font-size:12px;line-height:12px;color:#000;transform:scaleX(0.88);transform-origin:0 0;">Timestamp</div></div><div style="left:620px;top:72px;width:132px;height:17px;background:#FFFFFF;"></div><div style="left:753px;top:72px;width:11px;height:17px;background:#FFFFFF;"></div><div style="left:12px;top:89px;width:752px;height:1px;background:#C0C0C0;"></div><div style="left:212px;top:72px;width:1px;height:18px;background:#C0C0C0;"></div><div style="left:277px;top:72px;width:1px;height:18px;background:#C0C0C0;"></div><div style="left:437px;top:72px;width:1px;height:18px;background:#C0C0C0;"></div><div style="left:535px;top:72px;width:1px;height:18px;background:#C0C0C0;"></div><div style="left:619px;top:72px;width:1px;height:18px;background:#C0C0C0;"></div><div style="left:752px;top:72px;width:1px;height:18px;background:#C0C0C0;"></div><div style="left:0px;top:90px;width:12px;height:18px;background:#ECE9D8;"></div><div style="left:0px;top:90px;width:11px;height:1px;background:#FFFFFF;"></div><div style="left:0px;top:90px;width:1px;height:17px;background:#FFFFFF;"></div><div style="left:11px;top:90px;width:1px;height:18px;background:#ACA899;"></div><div style="left:0px;top:107px;width:12px;height:1px;background:#ACA899;"></div><div style="left:12px;top:90px;width:200px;height:17px;background:#FFFFE1;"></div><div style="left:12px;top:90px;width:200px;height:17px;overflow:hidden"><div class="t" style="left:2px;top:2px;font-size:12px;line-height:12px;color:#000;transform:scaleX(0.88);transform-origin:0 0;">ANR_IS_ACTIVATION</div></div><div style="left:213px;top:90px;width:64px;height:17px;background:#FFFFFF;"></div><div style="left:213px;top:90px;width:64px;height:17px;overflow:hidden"><div class="t" style="left:2.7px;top:3px;font-size:11px;line-height:11px;color:#000;transform:scaleX(0.999);transform-origin:0 0;">zda je polozka aktivacni</div></div><div style="left:278px;top:90px;width:159px;height:17px;background:#FFFFFF;"></div><div style="left:278px;top:90px;width:159px;height:17px;overflow:hidden"><div class="t" style="left:2px;top:2px;font-size:12px;line-height:12px;color:#000;transform:scaleX(0.88);transform-origin:0 0;">D_BOOLEAN_FALSE</div></div><div style="left:438px;top:90px;width:97px;height:17px;background:#FFFFFF;"></div><div style="left:438px;top:90px;width:97px;height:17px;overflow:hidden"><div class="t" style="right:3px;top:2px;font-size:12px;line-height:12px;color:#000;transform:scaleX(0.88);transform-origin:100% 0">7</div></div><div style="left:536px;top:90px;width:83px;height:17px;background:#FFFFFF;"></div><div style="left:536px;top:90px;width:83px;height:17px;overflow:hidden"><div class="t" style="left:2px;top:2px;font-size:12px;line-height:12px;color:#000;transform:scaleX(0.88);transform-origin:0 0;">Smallint</div></div><div style="left:620px;top:90px;width:132px;height:17px;background:#FFFFFF;"></div><div style="left:620px;top:90px;width:132px;height:17px;overflow:hidden"><div class="t" style="right:3px;top:2px;font-size:12px;line-height:12px;color:#000;transform:scaleX(0.88);transform-origin:100% 0">0</div></div><div style="left:753px;top:90px;width:11px;height:17px;background:#FFFFFF;"></div><div style="left:12px;top:107px;width:752px;height:1px;background:#C0C0C0;"></div><div style="left:212px;top:90px;width:1px;height:18px;background:#C0C0C0;"></div><div style="left:277px;top:90px;width:1px;height:18px;background:#C0C0C0;"></div><div style="left:437px;top:90px;width:1px;height:18px;background:#C0C0C0;"></div><div style="left:535px;top:90px;width:1px;height:18px;background:#C0C0C0;"></div><div style="left:619px;top:90px;width:1px;height:18px;background:#C0C0C0;"></div><div style="left:752px;top:90px;width:1px;height:18px;background:#C0C0C0;"></div><div style="left:0px;top:108px;width:12px;height:18px;background:#ECE9D8;"></div><div style="left:0px;top:108px;width:11px;height:1px;background:#FFFFFF;"></div><div style="left:0px;top:108px;width:1px;height:17px;background:#FFFFFF;"></div><div style="left:11px;top:108px;width:1px;height:18px;background:#ACA899;"></div><div style="left:0px;top:125px;width:12px;height:1px;background:#ACA899;"></div><svg style="position:absolute;left:3px;top:111px" width="7" height="12" viewBox="0 0 7 12"><path d="M0 0.5 L5.8 5.5 L0 10.5 Z" fill="#000"/></svg><div style="left:12px;top:108px;width:200px;height:17px;background:#C0DCC0;"></div><div style="left:12px;top:108px;width:200px;height:17px;overflow:hidden"><div class="t" style="left:2px;top:2px;font-size:12px;line-height:12px;color:#000;transform:scaleX(0.88);transform-origin:0 0;">ANR_QUANTITY</div></div><div style="left:213px;top:108px;width:64px;height:17px;background:#316AC5;"></div><div style="left:213px;top:108px;width:64px;height:17px;overflow:hidden"><div class="t" style="left:2.7px;top:3px;font-size:11px;line-height:11px;color:#FFFFFF;transform:scaleX(0.999);transform-origin:0 0;">celkovy pocet kusu</div></div><div style="left:278px;top:108px;width:159px;height:17px;background:#C0DCC0;"></div><div style="left:278px;top:108px;width:159px;height:17px;overflow:hidden"><div class="t" style="left:2px;top:2px;font-size:12px;line-height:12px;color:#000;transform:scaleX(0.88);transform-origin:0 0;">D_QUANTITY</div></div><div style="left:438px;top:108px;width:97px;height:17px;background:#C0DCC0;"></div><div style="left:438px;top:108px;width:97px;height:17px;overflow:hidden"><div class="t" style="right:3px;top:2px;font-size:12px;line-height:12px;color:#000;transform:scaleX(0.88);transform-origin:100% 0">27</div></div><div style="left:536px;top:108px;width:83px;height:17px;background:#C0DCC0;"></div><div style="left:536px;top:108px;width:83px;height:17px;overflow:hidden"><div class="t" style="left:2px;top:2px;font-size:12px;line-height:12px;color:#000;transform:scaleX(0.88);transform-origin:0 0;">Numeric</div></div><div style="left:620px;top:108px;width:132px;height:17px;background:#C0DCC0;"></div><div style="left:620px;top:108px;width:132px;height:17px;overflow:hidden"><div class="t" style="right:3px;top:2px;font-size:12px;line-height:12px;color:#000;transform:scaleX(0.88);transform-origin:100% 0">12</div></div><div style="left:753px;top:108px;width:11px;height:17px;background:#C0DCC0;"></div><div style="left:12px;top:125px;width:752px;height:1px;background:#C0C0C0;"></div><div style="left:212px;top:108px;width:1px;height:18px;background:#C0C0C0;"></div><div style="left:277px;top:108px;width:1px;height:18px;background:#C0C0C0;"></div><div style="left:437px;top:108px;width:1px;height:18px;background:#C0C0C0;"></div><div style="left:535px;top:108px;width:1px;height:18px;background:#C0C0C0;"></div><div style="left:619px;top:108px;width:1px;height:18px;background:#C0C0C0;"></div><div style="left:752px;top:108px;width:1px;height:18px;background:#C0C0C0;"></div><div style="left:0px;top:126px;width:12px;height:18px;background:#ECE9D8;"></div><div style="left:0px;top:126px;width:11px;height:1px;background:#FFFFFF;"></div><div style="left:0px;top:126px;width:1px;height:17px;background:#FFFFFF;"></div><div style="left:11px;top:126px;width:1px;height:18px;background:#ACA899;"></div><div style="left:0px;top:143px;width:12px;height:1px;background:#ACA899;"></div><div style="left:12px;top:126px;width:200px;height:17px;background:#FFFFE1;"></div><div style="left:12px;top:126px;width:200px;height:17px;overflow:hidden"><div class="t" style="left:2px;top:2px;font-size:12px;line-height:12px;color:#000;transform:scaleX(0.88);transform-origin:0 0;">ANR_RESERVED</div></div><div style="left:213px;top:126px;width:64px;height:17px;background:#FFFFFF;"></div><div style="left:213px;top:126px;width:64px;height:17px;overflow:hidden"><div class="t" style="left:2.7px;top:3px;font-size:11px;line-height:11px;color:#000;transform:scaleX(0.999);transform-origin:0 0;">pocet blokovanych kusu</div></div><div style="left:278px;top:126px;width:159px;height:17px;background:#FFFFFF;"></div><div style="left:278px;top:126px;width:159px;height:17px;overflow:hidden"><div class="t" style="left:2px;top:2px;font-size:12px;line-height:12px;color:#000;transform:scaleX(0.88);transform-origin:0 0;">D_QUANTITY</div></div><div style="left:438px;top:126px;width:97px;height:17px;background:#FFFFFF;"></div><div style="left:438px;top:126px;width:97px;height:17px;overflow:hidden"><div class="t" style="right:3px;top:2px;font-size:12px;line-height:12px;color:#000;transform:scaleX(0.88);transform-origin:100% 0">27</div></div><div style="left:536px;top:126px;width:83px;height:17px;background:#FFFFFF;"></div><div style="left:536px;top:126px;width:83px;height:17px;overflow:hidden"><div class="t" style="left:2px;top:2px;font-size:12px;line-height:12px;color:#000;transform:scaleX(0.88);transform-origin:0 0;">Numeric</div></div><div style="left:620px;top:126px;width:132px;height:17px;background:#FFFFFF;"></div><div style="left:620px;top:126px;width:132px;height:17px;overflow:hidden"><div class="t" style="right:3px;top:2px;font-size:12px;line-height:12px;color:#000;transform:scaleX(0.88);transform-origin:100% 0">12</div></div><div style="left:753px;top:126px;width:11px;height:17px;background:#FFFFFF;"></div><div style="left:12px;top:143px;width:752px;height:1px;background:#C0C0C0;"></div><div style="left:212px;top:126px;width:1px;height:18px;background:#C0C0C0;"></div><div style="left:277px;top:126px;width:1px;height:18px;background:#C0C0C0;"></div><div style="left:437px;top:126px;width:1px;height:18px;background:#C0C0C0;"></div><div style="left:535px;top:126px;width:1px;height:18px;background:#C0C0C0;"></div><div style="left:619px;top:126px;width:1px;height:18px;background:#C0C0C0;"></div><div style="left:752px;top:126px;width:1px;height:18px;background:#C0C0C0;"></div><div style="left:0px;top:144px;width:12px;height:18px;background:#ECE9D8;"></div><div style="left:0px;top:144px;width:11px;height:1px;background:#FFFFFF;"></div><div style="left:0px;top:144px;width:1px;height:17px;background:#FFFFFF;"></div><div style="left:11px;top:144px;width:1px;height:18px;background:#ACA899;"></div><div style="left:0px;top:161px;width:12px;height:1px;background:#ACA899;"></div><div style="left:12px;top:144px;width:200px;height:17px;background:#FFFFE1;"></div><div style="left:12px;top:144px;width:200px;height:17px;overflow:hidden"><div class="t" style="left:2px;top:2px;font-size:12px;line-height:12px;color:#000;transform:scaleX(0.88);transform-origin:0 0;">ANR_SHOPPING_AMOUNT</div></div><div style="left:213px;top:144px;width:64px;height:17px;background:#FFFFFF;"></div><div style="left:213px;top:144px;width:64px;height:17px;overflow:hidden"><div class="t" style="left:2.7px;top:3px;font-size:11px;line-height:11px;color:#000;transform:scaleX(0.999);transform-origin:0 0;">jednotkova u cena</div></div><div style="left:278px;top:144px;width:159px;height:17px;background:#FFFFFF;"></div><div style="left:278px;top:144px;width:159px;height:17px;overflow:hidden"><div class="t" style="left:2px;top:2px;font-size:12px;line-height:12px;color:#000;transform:scaleX(0.88);transform-origin:0 0;">D_MONEYNORMAL</div></div><div style="left:438px;top:144px;width:97px;height:17px;background:#FFFFFF;"></div><div style="left:438px;top:144px;width:97px;height:17px;overflow:hidden"><div class="t" style="right:3px;top:2px;font-size:12px;line-height:12px;color:#000;transform:scaleX(0.88);transform-origin:100% 0">16</div></div><div style="left:536px;top:144px;width:83px;height:17px;background:#FFFFFF;"></div><div style="left:536px;top:144px;width:83px;height:17px;overflow:hidden"><div class="t" style="left:2px;top:2px;font-size:12px;line-height:12px;color:#000;transform:scaleX(0.88);transform-origin:0 0;">Numeric</div></div><div style="left:620px;top:144px;width:132px;height:17px;background:#FFFFFF;"></div><div style="left:620px;top:144px;width:132px;height:17px;overflow:hidden"><div class="t" style="right:3px;top:2px;font-size:12px;line-height:12px;color:#000;transform:scaleX(0.88);transform-origin:100% 0">12</div></div><div style="left:753px;top:144px;width:11px;height:17px;background:#FFFFFF;"></div><div style="left:12px;top:161px;width:752px;height:1px;background:#C0C0C0;"></div><div style="left:212px;top:144px;width:1px;height:18px;background:#C0C0C0;"></div><div style="left:277px;top:144px;width:1px;height:18px;background:#C0C0C0;"></div><div style="left:437px;top:144px;width:1px;height:18px;background:#C0C0C0;"></div><div style="left:535px;top:144px;width:1px;height:18px;background:#C0C0C0;"></div><div style="left:619px;top:144px;width:1px;height:18px;background:#C0C0C0;"></div><div style="left:752px;top:144px;width:1px;height:18px;background:#C0C0C0;"></div><div style="left:0px;top:162px;width:12px;height:18px;background:#ECE9D8;"></div><div style="left:0px;top:162px;width:11px;height:1px;background:#FFFFFF;"></div><div style="left:0px;top:162px;width:1px;height:17px;background:#FFFFFF;"></div><div style="left:11px;top:162px;width:1px;height:18px;background:#ACA899;"></div><div style="left:0px;top:179px;width:12px;height:1px;background:#ACA899;"></div><div style="left:12px;top:162px;width:200px;height:17px;background:#FFFFE1;"></div><div style="left:12px;top:162px;width:200px;height:17px;overflow:hidden"><div class="t" style="left:2px;top:2px;font-size:12px;line-height:12px;color:#000;transform:scaleX(0.88);transform-origin:0 0;">ANR_SHOPPING_AMOUNT_SPECIAL</div></div><div style="left:213px;top:162px;width:64px;height:17px;background:#FFFFFF;"></div><div style="left:213px;top:162px;width:64px;height:17px;overflow:hidden"><div class="t" style="left:2.7px;top:3px;font-size:11px;line-height:11px;color:#000;transform:scaleX(0.999);transform-origin:0 0;">jednotkova r cena</div></div><div style="left:278px;top:162px;width:159px;height:17px;background:#FFFFFF;"></div><div style="left:278px;top:162px;width:159px;height:17px;overflow:hidden"><div class="t" style="left:2px;top:2px;font-size:12px;line-height:12px;color:#000;transform:scaleX(0.88);transform-origin:0 0;">D_MONEYNORMAL</div></div><div style="left:438px;top:162px;width:97px;height:17px;background:#FFFFFF;"></div><div style="left:438px;top:162px;width:97px;height:17px;overflow:hidden"><div class="t" style="right:3px;top:2px;font-size:12px;line-height:12px;color:#000;transform:scaleX(0.88);transform-origin:100% 0">16</div></div><div style="left:536px;top:162px;width:83px;height:17px;background:#FFFFFF;"></div><div style="left:536px;top:162px;width:83px;height:17px;overflow:hidden"><div class="t" style="left:2px;top:2px;font-size:12px;line-height:12px;color:#000;transform:scaleX(0.88);transform-origin:0 0;">Numeric</div></div><div style="left:620px;top:162px;width:132px;height:17px;background:#FFFFFF;"></div><div style="left:620px;top:162px;width:132px;height:17px;overflow:hidden"><div class="t" style="right:3px;top:2px;font-size:12px;line-height:12px;color:#000;transform:scaleX(0.88);transform-origin:100% 0">12</div></div><div style="left:753px;top:162px;width:11px;height:17px;background:#FFFFFF;"></div><div style="left:12px;top:179px;width:752px;height:1px;background:#C0C0C0;"></div><div style="left:212px;top:162px;width:1px;height:18px;background:#C0C0C0;"></div><div style="left:277px;top:162px;width:1px;height:18px;background:#C0C0C0;"></div><div style="left:437px;top:162px;width:1px;height:18px;background:#C0C0C0;"></div><div style="left:535px;top:162px;width:1px;height:18px;background:#C0C0C0;"></div><div style="left:619px;top:162px;width:1px;height:18px;background:#C0C0C0;"></div><div style="left:752px;top:162px;width:1px;height:18px;background:#C0C0C0;"></div><div style="left:0px;top:180px;width:12px;height:18px;background:#ECE9D8;"></div><div style="left:0px;top:180px;width:11px;height:1px;background:#FFFFFF;"></div><div style="left:0px;top:180px;width:1px;height:17px;background:#FFFFFF;"></div><div style="left:11px;top:180px;width:1px;height:18px;background:#ACA899;"></div><div style="left:0px;top:197px;width:12px;height:1px;background:#ACA899;"></div><div style="left:12px;top:180px;width:200px;height:17px;background:#FFFFE1;"></div><div style="left:12px;top:180px;width:200px;height:17px;overflow:hidden"><div class="t" style="left:2px;top:2px;font-size:12px;line-height:12px;color:#000;transform:scaleX(0.88);transform-origin:0 0;">ANR_SITE</div></div><div style="left:213px;top:180px;width:64px;height:17px;background:#FFFFFF;"></div><div style="left:213px;top:180px;width:64px;height:17px;overflow:hidden"><div class="t" style="left:2.7px;top:3px;font-size:11px;line-height:11px;color:#000;transform:scaleX(0.999);transform-origin:0 0;">identifikace</div></div><div style="left:278px;top:180px;width:159px;height:17px;background:#FFFFFF;"></div><div style="left:278px;top:180px;width:159px;height:17px;overflow:hidden"><div class="t" style="left:2px;top:2px;font-size:12px;line-height:12px;color:#000;transform:scaleX(0.88);transform-origin:0 0;">D_SITE</div></div><div style="left:438px;top:180px;width:97px;height:17px;background:#FFFFFF;"></div><div style="left:438px;top:180px;width:97px;height:17px;overflow:hidden"><div class="t" style="right:3px;top:2px;font-size:12px;line-height:12px;color:#000;transform:scaleX(0.88);transform-origin:100% 0">7</div></div><div style="left:536px;top:180px;width:83px;height:17px;background:#FFFFFF;"></div><div style="left:536px;top:180px;width:83px;height:17px;overflow:hidden"><div class="t" style="left:2px;top:2px;font-size:12px;line-height:12px;color:#000;transform:scaleX(0.88);transform-origin:0 0;">Smallint</div></div><div style="left:620px;top:180px;width:132px;height:17px;background:#FFFFFF;"></div><div style="left:620px;top:180px;width:132px;height:17px;overflow:hidden"><div class="t" style="right:3px;top:2px;font-size:12px;line-height:12px;color:#000;transform:scaleX(0.88);transform-origin:100% 0">0</div></div><div style="left:753px;top:180px;width:11px;height:17px;background:#FFFFFF;"></div><div style="left:12px;top:197px;width:752px;height:1px;background:#C0C0C0;"></div><div style="left:212px;top:180px;width:1px;height:18px;background:#C0C0C0;"></div><div style="left:277px;top:180px;width:1px;height:18px;background:#C0C0C0;"></div><div style="left:437px;top:180px;width:1px;height:18px;background:#C0C0C0;"></div><div style="left:535px;top:180px;width:1px;height:18px;background:#C0C0C0;"></div><div style="left:619px;top:180px;width:1px;height:18px;background:#C0C0C0;"></div><div style="left:752px;top:180px;width:1px;height:18px;background:#C0C0C0;"></div><div style="left:0px;top:198px;width:12px;height:18px;background:#ECE9D8;"></div><div style="left:0px;top:198px;width:11px;height:1px;background:#FFFFFF;"></div><div style="left:0px;top:198px;width:1px;height:17px;background:#FFFFFF;"></div><div style="left:11px;top:198px;width:1px;height:18px;background:#ACA899;"></div><div style="left:0px;top:215px;width:12px;height:1px;background:#ACA899;"></div><div style="left:12px;top:198px;width:200px;height:17px;background:#FFFFE1;"></div><div style="left:12px;top:198px;width:200px;height:17px;overflow:hidden"><div class="t" style="left:2px;top:2px;font-size:12px;line-height:12px;color:#000;transform:scaleX(0.88);transform-origin:0 0;">ANR_UPD</div></div><div style="left:213px;top:198px;width:64px;height:17px;background:#FFFFFF;"></div><div style="left:278px;top:198px;width:159px;height:17px;background:#FFFFFF;"></div><div style="left:278px;top:198px;width:159px;height:17px;overflow:hidden"><div class="t" style="left:2px;top:2px;font-size:12px;line-height:12px;color:#000;transform:scaleX(0.88);transform-origin:0 0;">D_TIMESTAMP_UPDATED</div></div><div style="left:438px;top:198px;width:97px;height:17px;background:#FFFFFF;"></div><div style="left:438px;top:198px;width:97px;height:17px;overflow:hidden"><div class="t" style="right:3px;top:2px;font-size:12px;line-height:12px;color:#000;transform:scaleX(0.88);transform-origin:100% 0">35</div></div><div style="left:536px;top:198px;width:83px;height:17px;background:#FFFFFF;"></div><div style="left:536px;top:198px;width:83px;height:17px;overflow:hidden"><div class="t" style="left:2px;top:2px;font-size:12px;line-height:12px;color:#000;transform:scaleX(0.88);transform-origin:0 0;">Timestamp</div></div><div style="left:620px;top:198px;width:132px;height:17px;background:#FFFFFF;"></div><div style="left:753px;top:198px;width:11px;height:17px;background:#FFFFFF;"></div><div style="left:12px;top:215px;width:752px;height:1px;background:#C0C0C0;"></div><div style="left:212px;top:198px;width:1px;height:18px;background:#C0C0C0;"></div><div style="left:277px;top:198px;width:1px;height:18px;background:#C0C0C0;"></div><div style="left:437px;top:198px;width:1px;height:18px;background:#C0C0C0;"></div><div style="left:535px;top:198px;width:1px;height:18px;background:#C0C0C0;"></div><div style="left:619px;top:198px;width:1px;height:18px;background:#C0C0C0;"></div><div style="left:752px;top:198px;width:1px;height:18px;background:#C0C0C0;"></div><div style="left:0px;top:216px;width:12px;height:18px;background:#ECE9D8;"></div><div style="left:0px;top:216px;width:11px;height:1px;background:#FFFFFF;"></div><div style="left:0px;top:216px;width:1px;height:17px;background:#FFFFFF;"></div><div style="left:11px;top:216px;width:1px;height:18px;background:#ACA899;"></div><div style="left:0px;top:233px;width:12px;height:1px;background:#ACA899;"></div><div style="left:12px;top:216px;width:200px;height:17px;background:#FFFFE1;"></div><div style="left:12px;top:216px;width:200px;height:17px;overflow:hidden"><div class="t" style="left:2px;top:2px;font-size:12px;line-height:12px;color:#000;transform:scaleX(0.88);transform-origin:0 0;">ANR_USER_INS</div></div><div style="left:213px;top:216px;width:64px;height:17px;background:#FFFFFF;"></div><div style="left:278px;top:216px;width:159px;height:17px;background:#FFFFFF;"></div><div style="left:278px;top:216px;width:159px;height:17px;overflow:hidden"><div class="t" style="left:2px;top:2px;font-size:12px;line-height:12px;color:#000;transform:scaleX(0.88);transform-origin:0 0;">D_USER_ID</div></div><div style="left:438px;top:216px;width:97px;height:17px;background:#FFFFFF;"></div><div style="left:438px;top:216px;width:97px;height:17px;overflow:hidden"><div class="t" style="right:3px;top:2px;font-size:12px;line-height:12px;color:#000;transform:scaleX(0.88);transform-origin:100% 0">7</div></div><div style="left:536px;top:216px;width:83px;height:17px;background:#FFFFFF;"></div><div style="left:536px;top:216px;width:83px;height:17px;overflow:hidden"><div class="t" style="left:2px;top:2px;font-size:12px;line-height:12px;color:#000;transform:scaleX(0.88);transform-origin:0 0;">Smallint</div></div><div style="left:620px;top:216px;width:132px;height:17px;background:#FFFFFF;"></div><div style="left:620px;top:216px;width:132px;height:17px;overflow:hidden"><div class="t" style="right:3px;top:2px;font-size:12px;line-height:12px;color:#000;transform:scaleX(0.88);transform-origin:100% 0">0</div></div><div style="left:753px;top:216px;width:11px;height:17px;background:#FFFFFF;"></div><div style="left:12px;top:233px;width:752px;height:1px;background:#C0C0C0;"></div><div style="left:212px;top:216px;width:1px;height:18px;background:#C0C0C0;"></div><div style="left:277px;top:216px;width:1px;height:18px;background:#C0C0C0;"></div><div style="left:437px;top:216px;width:1px;height:18px;background:#C0C0C0;"></div><div style="left:535px;top:216px;width:1px;height:18px;background:#C0C0C0;"></div><div style="left:619px;top:216px;width:1px;height:18px;background:#C0C0C0;"></div><div style="left:752px;top:216px;width:1px;height:18px;background:#C0C0C0;"></div><div style="left:0px;top:234px;width:12px;height:18px;background:#ECE9D8;"></div><div style="left:0px;top:234px;width:11px;height:1px;background:#FFFFFF;"></div><div style="left:0px;top:234px;width:1px;height:17px;background:#FFFFFF;"></div><div style="left:11px;top:234px;width:1px;height:18px;background:#ACA899;"></div><div style="left:0px;top:251px;width:12px;height:1px;background:#ACA899;"></div><div style="left:12px;top:234px;width:200px;height:17px;background:#FFFFE1;"></div><div style="left:12px;top:234px;width:200px;height:17px;overflow:hidden"><div class="t" style="left:2px;top:2px;font-size:12px;line-height:12px;color:#000;transform:scaleX(0.88);transform-origin:0 0;">ANR_USER_UPD</div></div><div style="left:213px;top:234px;width:64px;height:17px;background:#FFFFFF;"></div><div style="left:278px;top:234px;width:159px;height:17px;background:#FFFFFF;"></div><div style="left:278px;top:234px;width:159px;height:17px;overflow:hidden"><div class="t" style="left:2px;top:2px;font-size:12px;line-height:12px;color:#000;transform:scaleX(0.88);transform-origin:0 0;">D_USER_ID</div></div><div style="left:438px;top:234px;width:97px;height:17px;background:#FFFFFF;"></div><div style="left:438px;top:234px;width:97px;height:17px;overflow:hidden"><div class="t" style="right:3px;top:2px;font-size:12px;line-height:12px;color:#000;transform:scaleX(0.88);transform-origin:100% 0">7</div></div><div style="left:536px;top:234px;width:83px;height:17px;background:#FFFFFF;"></div><div style="left:536px;top:234px;width:83px;height:17px;overflow:hidden"><div class="t" style="left:2px;top:2px;font-size:12px;line-height:12px;color:#000;transform:scaleX(0.88);transform-origin:0 0;">Smallint</div></div><div style="left:620px;top:234px;width:132px;height:17px;background:#FFFFFF;"></div><div style="left:620px;top:234px;width:132px;height:17px;overflow:hidden"><div class="t" style="right:3px;top:2px;font-size:12px;line-height:12px;color:#000;transform:scaleX(0.88);transform-origin:100% 0">0</div></div><div style="left:753px;top:234px;width:11px;height:17px;background:#FFFFFF;"></div><div style="left:12px;top:251px;width:752px;height:1px;background:#C0C0C0;"></div><div style="left:212px;top:234px;width:1px;height:18px;background:#C0C0C0;"></div><div style="left:277px;top:234px;width:1px;height:18px;background:#C0C0C0;"></div><div style="left:437px;top:234px;width:1px;height:18px;background:#C0C0C0;"></div><div style="left:535px;top:234px;width:1px;height:18px;background:#C0C0C0;"></div><div style="left:619px;top:234px;width:1px;height:18px;background:#C0C0C0;"></div><div style="left:752px;top:234px;width:1px;height:18px;background:#C0C0C0;"></div><div style="left:0px;top:252px;width:12px;height:18px;background:#ECE9D8;"></div><div style="left:0px;top:252px;width:11px;height:1px;background:#FFFFFF;"></div><div style="left:0px;top:252px;width:1px;height:17px;background:#FFFFFF;"></div><div style="left:11px;top:252px;width:1px;height:18px;background:#ACA899;"></div><div style="left:0px;top:269px;width:12px;height:1px;background:#ACA899;"></div><div style="left:12px;top:252px;width:200px;height:17px;background:#FFFFE1;"></div><div style="left:12px;top:252px;width:200px;height:17px;overflow:hidden"><div class="t" style="left:2px;top:2px;font-size:12px;line-height:12px;color:#000;transform:scaleX(0.88);transform-origin:0 0;">AN_ID</div></div><div style="left:213px;top:252px;width:64px;height:17px;background:#FFFFFF;"></div><div style="left:278px;top:252px;width:159px;height:17px;background:#FFFFFF;"></div><div style="left:278px;top:252px;width:159px;height:17px;overflow:hidden"><div class="t" style="left:2px;top:2px;font-size:12px;line-height:12px;color:#000;transform:scaleX(0.88);transform-origin:0 0;">D_IDENTITY</div></div><div style="left:438px;top:252px;width:97px;height:17px;background:#FFFFFF;"></div><div style="left:438px;top:252px;width:97px;height:17px;overflow:hidden"><div class="t" style="right:3px;top:2px;font-size:12px;line-height:12px;color:#000;transform:scaleX(0.88);transform-origin:100% 0">8</div></div><div style="left:536px;top:252px;width:83px;height:17px;background:#FFFFFF;"></div><div style="left:536px;top:252px;width:83px;height:17px;overflow:hidden"><div class="t" style="left:2px;top:2px;font-size:12px;line-height:12px;color:#000;transform:scaleX(0.88);transform-origin:0 0;">Integer</div></div><div style="left:620px;top:252px;width:132px;height:17px;background:#FFFFFF;"></div><div style="left:620px;top:252px;width:132px;height:17px;overflow:hidden"><div class="t" style="right:3px;top:2px;font-size:12px;line-height:12px;color:#000;transform:scaleX(0.88);transform-origin:100% 0">0</div></div><div style="left:753px;top:252px;width:11px;height:17px;background:#FFFFFF;"></div><div style="left:12px;top:269px;width:752px;height:1px;background:#C0C0C0;"></div><div style="left:212px;top:252px;width:1px;height:18px;background:#C0C0C0;"></div><div style="left:277px;top:252px;width:1px;height:18px;background:#C0C0C0;"></div><div style="left:437px;top:252px;width:1px;height:18px;background:#C0C0C0;"></div><div style="left:535px;top:252px;width:1px;height:18px;background:#C0C0C0;"></div><div style="left:619px;top:252px;width:1px;height:18px;background:#C0C0C0;"></div><div style="left:752px;top:252px;width:1px;height:18px;background:#C0C0C0;"></div><div style="left:0px;top:270px;width:12px;height:18px;background:#ECE9D8;"></div><div style="left:0px;top:270px;width:11px;height:1px;background:#FFFFFF;"></div><div style="left:0px;top:270px;width:1px;height:17px;background:#FFFFFF;"></div><div style="left:11px;top:270px;width:1px;height:18px;background:#ACA899;"></div><div style="left:0px;top:287px;width:12px;height:1px;background:#ACA899;"></div><div style="left:12px;top:270px;width:200px;height:17px;background:#FFFFE1;"></div><div style="left:12px;top:270px;width:200px;height:17px;overflow:hidden"><div class="t" style="left:2px;top:2px;font-size:12px;line-height:12px;color:#000;transform:scaleX(0.88);transform-origin:0 0;">AN_SITE</div></div><div style="left:213px;top:270px;width:64px;height:17px;background:#FFFFFF;"></div><div style="left:213px;top:270px;width:64px;height:17px;overflow:hidden"><div class="t" style="left:2.7px;top:3px;font-size:11px;line-height:11px;color:#000;transform:scaleX(0.999);transform-origin:0 0;">odkaz na hlavicku</div></div><div style="left:278px;top:270px;width:159px;height:17px;background:#FFFFFF;"></div><div style="left:278px;top:270px;width:159px;height:17px;overflow:hidden"><div class="t" style="left:2px;top:2px;font-size:12px;line-height:12px;color:#000;transform:scaleX(0.88);transform-origin:0 0;">D_SITE</div></div><div style="left:438px;top:270px;width:97px;height:17px;background:#FFFFFF;"></div><div style="left:438px;top:270px;width:97px;height:17px;overflow:hidden"><div class="t" style="right:3px;top:2px;font-size:12px;line-height:12px;color:#000;transform:scaleX(0.88);transform-origin:100% 0">7</div></div><div style="left:536px;top:270px;width:83px;height:17px;background:#FFFFFF;"></div><div style="left:536px;top:270px;width:83px;height:17px;overflow:hidden"><div class="t" style="left:2px;top:2px;font-size:12px;line-height:12px;color:#000;transform:scaleX(0.88);transform-origin:0 0;">Smallint</div></div><div style="left:620px;top:270px;width:132px;height:17px;background:#FFFFFF;"></div><div style="left:620px;top:270px;width:132px;height:17px;overflow:hidden"><div class="t" style="right:3px;top:2px;font-size:12px;line-height:12px;color:#000;transform:scaleX(0.88);transform-origin:100% 0">0</div></div><div style="left:753px;top:270px;width:11px;height:17px;background:#FFFFFF;"></div><div style="left:12px;top:287px;width:752px;height:1px;background:#C0C0C0;"></div><div style="left:212px;top:270px;width:1px;height:18px;background:#C0C0C0;"></div><div style="left:277px;top:270px;width:1px;height:18px;background:#C0C0C0;"></div><div style="left:437px;top:270px;width:1px;height:18px;background:#C0C0C0;"></div><div style="left:535px;top:270px;width:1px;height:18px;background:#C0C0C0;"></div><div style="left:619px;top:270px;width:1px;height:18px;background:#C0C0C0;"></div><div style="left:752px;top:270px;width:1px;height:18px;background:#C0C0C0;"></div><div style="left:0px;top:288px;width:12px;height:18px;background:#ECE9D8;"></div><div style="left:0px;top:288px;width:11px;height:1px;background:#FFFFFF;"></div><div style="left:0px;top:288px;width:1px;height:17px;background:#FFFFFF;"></div><div style="left:11px;top:288px;width:1px;height:18px;background:#ACA899;"></div><div style="left:0px;top:305px;width:12px;height:1px;background:#ACA899;"></div><div style="left:12px;top:288px;width:200px;height:17px;background:#FFFFE1;"></div><div style="left:12px;top:288px;width:200px;height:17px;overflow:hidden"><div class="t" style="left:2px;top:2px;font-size:12px;line-height:12px;color:#000;transform:scaleX(0.88);transform-origin:0 0;">AOR_ID</div></div><div style="left:213px;top:288px;width:64px;height:17px;background:#FFFFFF;"></div><div style="left:278px;top:288px;width:159px;height:17px;background:#FFFFFF;"></div><div style="left:278px;top:288px;width:159px;height:17px;overflow:hidden"><div class="t" style="left:2px;top:2px;font-size:12px;line-height:12px;color:#000;transform:scaleX(0.88);transform-origin:0 0;">D_IDENTITYBIG_NULL</div></div><div style="left:438px;top:288px;width:97px;height:17px;background:#FFFFFF;"></div><div style="left:438px;top:288px;width:97px;height:17px;overflow:hidden"><div class="t" style="right:3px;top:2px;font-size:12px;line-height:12px;color:#000;transform:scaleX(0.88);transform-origin:100% 0">16</div></div><div style="left:536px;top:288px;width:83px;height:17px;background:#FFFFFF;"></div><div style="left:536px;top:288px;width:83px;height:17px;overflow:hidden"><div class="t" style="left:2px;top:2px;font-size:12px;line-height:12px;color:#000;transform:scaleX(0.88);transform-origin:0 0;">Numeric</div></div><div style="left:620px;top:288px;width:132px;height:17px;background:#FFFFFF;"></div><div style="left:620px;top:288px;width:132px;height:17px;overflow:hidden"><div class="t" style="right:3px;top:2px;font-size:12px;line-height:12px;color:#000;transform:scaleX(0.88);transform-origin:100% 0">18</div></div><div style="left:753px;top:288px;width:11px;height:17px;background:#FFFFFF;"></div><div style="left:12px;top:305px;width:752px;height:1px;background:#C0C0C0;"></div><div style="left:212px;top:288px;width:1px;height:18px;background:#C0C0C0;"></div><div style="left:277px;top:288px;width:1px;height:18px;background:#C0C0C0;"></div><div style="left:437px;top:288px;width:1px;height:18px;background:#C0C0C0;"></div><div style="left:535px;top:288px;width:1px;height:18px;background:#C0C0C0;"></div><div style="left:619px;top:288px;width:1px;height:18px;background:#C0C0C0;"></div><div style="left:752px;top:288px;width:1px;height:18px;background:#C0C0C0;"></div><div style="left:0px;top:306px;width:12px;height:18px;background:#ECE9D8;"></div><div style="left:0px;top:306px;width:11px;height:1px;background:#FFFFFF;"></div><div style="left:0px;top:306px;width:1px;height:17px;background:#FFFFFF;"></div><div style="left:11px;top:306px;width:1px;height:18px;background:#ACA899;"></div><div style="left:0px;top:323px;width:12px;height:1px;background:#ACA899;"></div><div style="left:12px;top:306px;width:200px;height:17px;background:#FFFFE1;"></div><div style="left:12px;top:306px;width:200px;height:17px;overflow:hidden"><div class="t" style="left:2px;top:2px;font-size:12px;line-height:12px;color:#000;transform:scaleX(0.88);transform-origin:0 0;">AOR_SITE</div></div><div style="left:213px;top:306px;width:64px;height:17px;background:#FFFFFF;"></div><div style="left:213px;top:306px;width:64px;height:17px;overflow:hidden"><div class="t" style="left:2.7px;top:3px;font-size:11px;line-height:11px;color:#000;transform:scaleX(0.999);transform-origin:0 0;">zdrojova radka</div></div><div style="left:278px;top:306px;width:159px;height:17px;background:#FFFFFF;"></div><div style="left:278px;top:306px;width:159px;height:17px;overflow:hidden"><div class="t" style="left:2px;top:2px;font-size:12px;line-height:12px;color:#000;transform:scaleX(0.88);transform-origin:0 0;">D_SITE_NOREF</div></div><div style="left:438px;top:306px;width:97px;height:17px;background:#FFFFFF;"></div><div style="left:438px;top:306px;width:97px;height:17px;overflow:hidden"><div class="t" style="right:3px;top:2px;font-size:12px;line-height:12px;color:#000;transform:scaleX(0.88);transform-origin:100% 0">7</div></div><div style="left:536px;top:306px;width:83px;height:17px;background:#FFFFFF;"></div><div style="left:536px;top:306px;width:83px;height:17px;overflow:hidden"><div class="t" style="left:2px;top:2px;font-size:12px;line-height:12px;color:#000;transform:scaleX(0.88);transform-origin:0 0;">Smallint</div></div><div style="left:620px;top:306px;width:132px;height:17px;background:#FFFFFF;"></div><div style="left:620px;top:306px;width:132px;height:17px;overflow:hidden"><div class="t" style="right:3px;top:2px;font-size:12px;line-height:12px;color:#000;transform:scaleX(0.88);transform-origin:100% 0">0</div></div><div style="left:753px;top:306px;width:11px;height:17px;background:#FFFFFF;"></div><div style="left:12px;top:323px;width:752px;height:1px;background:#C0C0C0;"></div><div style="left:212px;top:306px;width:1px;height:18px;background:#C0C0C0;"></div><div style="left:277px;top:306px;width:1px;height:18px;background:#C0C0C0;"></div><div style="left:437px;top:306px;width:1px;height:18px;background:#C0C0C0;"></div><div style="left:535px;top:306px;width:1px;height:18px;background:#C0C0C0;"></div><div style="left:619px;top:306px;width:1px;height:18px;background:#C0C0C0;"></div><div style="left:752px;top:306px;width:1px;height:18px;background:#C0C0C0;"></div><div style="left:0px;top:324px;width:12px;height:18px;background:#ECE9D8;"></div><div style="left:0px;top:324px;width:11px;height:1px;background:#FFFFFF;"></div><div style="left:0px;top:324px;width:1px;height:17px;background:#FFFFFF;"></div><div style="left:11px;top:324px;width:1px;height:18px;background:#ACA899;"></div><div style="left:0px;top:341px;width:12px;height:1px;background:#ACA899;"></div><div style="left:12px;top:324px;width:200px;height:17px;background:#FFFFE1;"></div><div style="left:12px;top:324px;width:200px;height:17px;overflow:hidden"><div class="t" style="left:2px;top:2px;font-size:12px;line-height:12px;color:#000;transform:scaleX(0.88);transform-origin:0 0;">SK_ID</div></div><div style="left:213px;top:324px;width:64px;height:17px;background:#FFFFFF;"></div><div style="left:213px;top:324px;width:64px;height:17px;overflow:hidden"><div class="t" style="left:2.7px;top:3px;font-size:11px;line-height:11px;color:#000;transform:scaleX(0.999);transform-origin:0 0;">sklad - stejny</div></div><div style="left:278px;top:324px;width:159px;height:17px;background:#FFFFFF;"></div><div style="left:278px;top:324px;width:159px;height:17px;overflow:hidden"><div class="t" style="left:2px;top:2px;font-size:12px;line-height:12px;color:#000;transform:scaleX(0.88);transform-origin:0 0;">D_WAREHOUSE_ID</div></div><div style="left:438px;top:324px;width:97px;height:17px;background:#FFFFFF;"></div><div style="left:438px;top:324px;width:97px;height:17px;overflow:hidden"><div class="t" style="right:3px;top:2px;font-size:12px;line-height:12px;color:#000;transform:scaleX(0.88);transform-origin:100% 0">7</div></div><div style="left:536px;top:324px;width:83px;height:17px;background:#FFFFFF;"></div><div style="left:536px;top:324px;width:83px;height:17px;overflow:hidden"><div class="t" style="left:2px;top:2px;font-size:12px;line-height:12px;color:#000;transform:scaleX(0.88);transform-origin:0 0;">Smallint</div></div><div style="left:620px;top:324px;width:132px;height:17px;background:#FFFFFF;"></div><div style="left:620px;top:324px;width:132px;height:17px;overflow:hidden"><div class="t" style="right:3px;top:2px;font-size:12px;line-height:12px;color:#000;transform:scaleX(0.88);transform-origin:100% 0">0</div></div><div style="left:753px;top:324px;width:11px;height:17px;background:#FFFFFF;"></div><div style="left:12px;top:341px;width:752px;height:1px;background:#C0C0C0;"></div><div style="left:212px;top:324px;width:1px;height:18px;background:#C0C0C0;"></div><div style="left:277px;top:324px;width:1px;height:18px;background:#C0C0C0;"></div><div style="left:437px;top:324px;width:1px;height:18px;background:#C0C0C0;"></div><div style="left:535px;top:324px;width:1px;height:18px;background:#C0C0C0;"></div><div style="left:619px;top:324px;width:1px;height:18px;background:#C0C0C0;"></div><div style="left:752px;top:324px;width:1px;height:18px;background:#C0C0C0;"></div></div><div style="left:777px;top:409px;width:17px;height:358px;background:linear-gradient(90deg,#F1EFE8,#FEFEFB)"></div><div style="left:778px;top:409px;width:13px;height:14px;border:1px solid #FFFFFF;border-radius:2px;background:linear-gradient(135deg,#D3DFFD 0%,#C4D5FB 45%,#B3C8F5 100%)"></div><div style="left:780px;top:425px;width:13px;height:1px;background:#A2B7E8;"></div><div style="left:793px;top:411px;width:1px;height:14px;background:#B9CAF0;"></div><svg style="position:absolute;left:0;top:0;overflow:visible" width="1" height="1"><path d="M781.2 419.3 L785.5 415.0 L789.8 419.3" stroke="#4D6185" stroke-width="2.0" fill="none"/></svg><div style="left:778px;top:750px;width:13px;height:14px;border:1px solid #FFFFFF;border-radius:2px;background:linear-gradient(135deg,#D3DFFD 0%,#C4D5FB 45%,#B3C8F5 100%)"></div><div style="left:780px;top:766px;width:13px;height:1px;background:#A2B7E8;"></div><div style="left:793px;top:752px;width:1px;height:14px;background:#B9CAF0;"></div><svg style="position:absolute;left:0;top:0;overflow:visible" width="1" height="1"><path d="M781.2 755.7 L785.5 760.0 L789.8 755.7" stroke="#4D6185" stroke-width="2.0" fill="none"/></svg><div style="left:778px;top:461px;width:13px;height:123px;border:1px solid #FFFFFF;border-radius:2px;background:linear-gradient(90deg,#CADAFD,#BED2FA)"></div><div style="left:780px;top:586px;width:13px;height:1px;background:#A2B7E8;"></div><div style="left:793px;top:463px;width:1px;height:123px;background:#B9CAF0;"></div><div style="left:782px;top:520px;width:6px;height:1px;background:#EEF3FE;"></div><div style="left:783px;top:521px;width:6px;height:1px;background:#8CA9E8;"></div><div style="left:782px;top:522px;width:6px;height:1px;background:#EEF3FE;"></div><div style="left:783px;top:523px;width:6px;height:1px;background:#8CA9E8;"></div><div style="left:782px;top:524px;width:6px;height:1px;background:#EEF3FE;"></div><div style="left:783px;top:525px;width:6px;height:1px;background:#8CA9E8;"></div><div style="left:782px;top:526px;width:6px;height:1px;background:#EEF3FE;"></div><div style="left:783px;top:527px;width:6px;height:1px;background:#8CA9E8;"></div><div style="left:13px;top:767px;width:764px;height:17px;background:linear-gradient(180deg,#F1EFE8,#FEFEFB)"></div><div style="left:13px;top:768px;width:14px;height:13px;border:1px solid #FFFFFF;border-radius:2px;background:linear-gradient(135deg,#D3DFFD 0%,#C4D5FB 45%,#B3C8F5 100%)"></div><div style="left:15px;top:783px;width:14px;height:1px;background:#A2B7E8;"></div><div style="left:29px;top:770px;width:1px;height:13px;background:#B9CAF0;"></div><svg style="position:absolute;left:0;top:0;overflow:visible" width="1" height="1"><path d="M23.3 771.2 L19.0 775.5 L23.3 779.8" stroke="#4D6185" stroke-width="2.0" fill="none"/></svg><div style="left:760px;top:768px;width:14px;height:13px;border:1px solid #FFFFFF;border-radius:2px;background:linear-gradient(135deg,#D3DFFD 0%,#C4D5FB 45%,#B3C8F5 100%)"></div><div style="left:762px;top:783px;width:14px;height:1px;background:#A2B7E8;"></div><div style="left:776px;top:770px;width:1px;height:13px;background:#B9CAF0;"></div><svg style="position:absolute;left:0;top:0;overflow:visible" width="1" height="1"><path d="M765.7 771.2 L770.0 775.5 L765.7 779.8" stroke="#4D6185" stroke-width="2.0" fill="none"/></svg><div style="left:30px;top:768px;width:14px;height:13px;border:1px solid #FFFFFF;border-radius:2px;background:linear-gradient(180deg,#CADAFD,#BED2FA)"></div><div style="left:32px;top:783px;width:14px;height:1px;background:#A2B7E8;"></div><div style="left:46px;top:770px;width:1px;height:13px;background:#B9CAF0;"></div><div style="left:33px;top:772px;width:1px;height:6px;background:#EEF3FE;"></div><div style="left:34px;top:773px;width:1px;height:6px;background:#8CA9E8;"></div><div style="left:35px;top:772px;width:1px;height:6px;background:#EEF3FE;"></div><div style="left:36px;top:773px;width:1px;height:6px;background:#8CA9E8;"></div><div style="left:37px;top:772px;width:1px;height:6px;background:#EEF3FE;"></div><div style="left:38px;top:773px;width:1px;height:6px;background:#8CA9E8;"></div><div style="left:39px;top:772px;width:1px;height:6px;background:#EEF3FE;"></div><div style="left:40px;top:773px;width:1px;height:6px;background:#8CA9E8;"></div><div style="left:777px;top:767px;width:17px;height:17px;background:#ECE9D8;"></div><div style="left:807px;top:406px;width:595px;height:380px;background:#FFFFFF;"></div><div style="left:807px;top:406px;width:594px;height:1px;background:#ACA899;"></div><div style="left:807px;top:406px;width:1px;height:379px;background:#ACA899;"></div><div style="left:808px;top:407px;width:592px;height:1px;background:#716F64;"></div><div style="left:808px;top:407px;width:1px;height:377px;background:#716F64;"></div><div style="left:1400px;top:407px;width:1px;height:378px;background:#F1EFE2;"></div><div style="left:808px;top:784px;width:593px;height:1px;background:#F1EFE2;"></div><div style="left:1401px;top:406px;width:1px;height:380px;background:#FFFFFF;"></div><div style="left:807px;top:785px;width:595px;height:1px;background:#FFFFFF;"></div><div style="left:809px;top:408px;width:574px;height:359px;overflow:hidden"><div style="left:0px;top:0px;width:12px;height:18px;background:#ECE9D8;"></div><div style="left:0px;top:0px;width:12px;height:1px;background:#FFFFFF;"></div><div style="left:0px;top:0px;width:1px;height:18px;background:#FFFFFF;"></div><div style="left:11px;top:0px;width:1px;height:18px;background:#ACA899;"></div><div style="left:0px;top:17px;width:12px;height:1px;background:#ACA899;"></div><div style="left:12px;top:0px;width:201px;height:18px;background:#ECE9D8;"></div><div style="left:12px;top:0px;width:201px;height:1px;background:#FFFFFF;"></div><div style="left:12px;top:0px;width:1px;height:17px;background:#FFFFFF;"></div><div style="left:212px;top:0px;width:1px;height:18px;background:#ACA899;"></div><div style="left:12px;top:17px;width:201px;height:1px;background:#ACA899;"></div><div style="left:213px;top:0px;width:65px;height:18px;background:#ECE9D8;"></div><div style="left:213px;top:0px;width:65px;height:1px;background:#FFFFFF;"></div><div style="left:213px;top:0px;width:1px;height:17px;background:#FFFFFF;"></div><div style="left:277px;top:0px;width:1px;height:18px;background:#ACA899;"></div><div style="left:213px;top:17px;width:65px;height:1px;background:#ACA899;"></div><div style="left:278px;top:0px;width:201px;height:18px;background:#ECE9D8;"></div><div style="left:278px;top:0px;width:201px;height:1px;background:#FFFFFF;"></div><div style="left:278px;top:0px;width:1px;height:17px;background:#FFFFFF;"></div><div style="left:478px;top:0px;width:1px;height:18px;background:#ACA899;"></div><div style="left:278px;top:17px;width:201px;height:1px;background:#ACA899;"></div><div style="left:479px;top:0px;width:135px;height:18px;background:#ECE9D8;"></div><div style="left:479px;top:0px;width:135px;height:1px;background:#FFFFFF;"></div><div style="left:479px;top:0px;width:1px;height:17px;background:#FFFFFF;"></div><div style="left:479px;top:17px;width:135px;height:1px;background:#ACA899;"></div><div style="left:12px;top:0px;width:200px;height:17px;overflow:hidden"><div class="t" style="left:2.5px;top:2px;font-size:12px;line-height:12px;color:#000;transform:scaleX(0.88);transform-origin:0 0;">FIELD NAME</div><svg style="position:absolute;left:68px;top:3px" width="9" height="10" viewBox="0 0 9 10"><rect x="0" y="0" width="8" height="1.6" fill="#8E8E8E"/><rect x="0" y="1.6" width="8" height="0.8" fill="#FFFFFF"/><path d="M4 2.8 L7.8 9.2 L0.2 9.2 Z" fill="#C8C8C8"/><path d="M4 2.8 L0.2 9.2" stroke="#888" stroke-width="0.9"/><path d="M0.2 9.4 L7.8 9.4" stroke="#F4F4F4" stroke-width="0.8"/></svg></div><div style="left:213px;top:0px;width:64px;height:17px;overflow:hidden"><div class="t" style="left:2.5px;top:2px;font-size:12px;line-height:12px;color:#000;transform:scaleX(0.88);transform-origin:0 0;">DESCRIPTION</div></div><div style="left:278px;top:0px;width:200px;height:17px;overflow:hidden"><div class="t" style="left:2.5px;top:2px;font-size:12px;line-height:12px;color:#000;transform:scaleX(0.88);transform-origin:0 0;">FIELD DOMAIN</div></div><div style="left:479px;top:0px;width:134px;height:17px;overflow:hidden"><div class="t" style="left:2.5px;top:2px;font-size:12px;line-height:12px;color:#000;transform:scaleX(0.88);transform-origin:0 0;">RDB$FIELD TYPE</div></div><div style="left:0px;top:18px;width:12px;height:18px;background:#ECE9D8;"></div><div style="left:0px;top:18px;width:11px;height:1px;background:#FFFFFF;"></div><div style="left:0px;top:18px;width:1px;height:17px;background:#FFFFFF;"></div><div style="left:11px;top:18px;width:1px;height:18px;background:#ACA899;"></div><div style="left:0px;top:35px;width:12px;height:1px;background:#ACA899;"></div><svg style="position:absolute;left:3px;top:21px" width="7" height="12" viewBox="0 0 7 12"><path d="M0 0.5 L5.8 5.5 L0 10.5 Z" fill="#000"/></svg><div style="left:12px;top:18px;width:200px;height:17px;background:#316AC5;"></div><div style="left:12px;top:18px;width:200px;height:17px;overflow:hidden"><div class="t" style="left:2px;top:2px;font-size:12px;line-height:12px;color:#FFFFFF;transform:scaleX(0.88);transform-origin:0 0;">CI_TOLERABLE_PAYMENT_DIFF</div></div><div style="left:213px;top:18px;width:64px;height:17px;background:#C0DCC0;"></div><div style="left:278px;top:18px;width:200px;height:17px;background:#C0DCC0;"></div><div style="left:278px;top:18px;width:200px;height:17px;overflow:hidden"><div class="t" style="left:2px;top:2px;font-size:12px;line-height:12px;color:#000;transform:scaleX(0.88);transform-origin:0 0;">D_MONEY_NORMAL</div></div><div style="left:479px;top:18px;width:95px;height:17px;background:#C0DCC0;"></div><div style="left:12px;top:35px;width:562px;height:1px;background:#C0C0C0;"></div><div style="left:212px;top:18px;width:1px;height:18px;background:#C0C0C0;"></div><div style="left:277px;top:18px;width:1px;height:18px;background:#C0C0C0;"></div><div style="left:478px;top:18px;width:1px;height:18px;background:#C0C0C0;"></div><div style="left:0px;top:36px;width:12px;height:18px;background:#ECE9D8;"></div><div style="left:0px;top:36px;width:11px;height:1px;background:#FFFFFF;"></div><div style="left:0px;top:36px;width:1px;height:17px;background:#FFFFFF;"></div><div style="left:11px;top:36px;width:1px;height:18px;background:#ACA899;"></div><div style="left:0px;top:53px;width:12px;height:1px;background:#ACA899;"></div><div style="left:12px;top:36px;width:200px;height:17px;background:#FFFFE1;"></div><div style="left:12px;top:36px;width:200px;height:17px;overflow:hidden"><div class="t" style="left:2px;top:2px;font-size:12px;line-height:12px;color:#000;transform:scaleX(0.88);transform-origin:0 0;">CN_ID</div></div><div style="left:213px;top:36px;width:64px;height:17px;background:#FFFFFF;"></div><div style="left:278px;top:36px;width:200px;height:17px;background:#FFFFFF;"></div><div style="left:278px;top:36px;width:200px;height:17px;overflow:hidden"><div class="t" style="left:2px;top:2px;font-size:12px;line-height:12px;color:#000;transform:scaleX(0.88);transform-origin:0 0;">D_COUNTRY_ID</div></div><div style="left:479px;top:36px;width:95px;height:17px;background:#FFFFFF;"></div><div style="left:12px;top:53px;width:562px;height:1px;background:#C0C0C0;"></div><div style="left:212px;top:36px;width:1px;height:18px;background:#C0C0C0;"></div><div style="left:277px;top:36px;width:1px;height:18px;background:#C0C0C0;"></div><div style="left:478px;top:36px;width:1px;height:18px;background:#C0C0C0;"></div><div style="left:0px;top:54px;width:12px;height:18px;background:#ECE9D8;"></div><div style="left:0px;top:54px;width:11px;height:1px;background:#FFFFFF;"></div><div style="left:0px;top:54px;width:1px;height:17px;background:#FFFFFF;"></div><div style="left:11px;top:54px;width:1px;height:18px;background:#ACA899;"></div><div style="left:0px;top:71px;width:12px;height:1px;background:#ACA899;"></div><div style="left:12px;top:54px;width:200px;height:17px;background:#FFFFE1;"></div><div style="left:12px;top:54px;width:200px;height:17px;overflow:hidden"><div class="t" style="left:2px;top:2px;font-size:12px;line-height:12px;color:#000;transform:scaleX(0.88);transform-origin:0 0;">CR_ID</div></div><div style="left:213px;top:54px;width:64px;height:17px;background:#FFFFFF;"></div><div style="left:278px;top:54px;width:200px;height:17px;background:#FFFFFF;"></div><div style="left:278px;top:54px;width:200px;height:17px;overflow:hidden"><div class="t" style="left:2px;top:2px;font-size:12px;line-height:12px;color:#000;transform:scaleX(0.88);transform-origin:0 0;">D_IDENTITY_SMALL</div></div><div style="left:479px;top:54px;width:95px;height:17px;background:#FFFFFF;"></div><div style="left:12px;top:71px;width:562px;height:1px;background:#C0C0C0;"></div><div style="left:212px;top:54px;width:1px;height:18px;background:#C0C0C0;"></div><div style="left:277px;top:54px;width:1px;height:18px;background:#C0C0C0;"></div><div style="left:478px;top:54px;width:1px;height:18px;background:#C0C0C0;"></div><div style="left:0px;top:72px;width:12px;height:18px;background:#ECE9D8;"></div><div style="left:0px;top:72px;width:11px;height:1px;background:#FFFFFF;"></div><div style="left:0px;top:72px;width:1px;height:17px;background:#FFFFFF;"></div><div style="left:11px;top:72px;width:1px;height:18px;background:#ACA899;"></div><div style="left:0px;top:89px;width:12px;height:1px;background:#ACA899;"></div><div style="left:12px;top:72px;width:200px;height:17px;background:#FFFFE1;"></div><div style="left:12px;top:72px;width:200px;height:17px;overflow:hidden"><div class="t" style="left:2px;top:2px;font-size:12px;line-height:12px;color:#000;transform:scaleX(0.88);transform-origin:0 0;">MFD_B2B_DISCOUNT_RATE</div></div><div style="left:213px;top:72px;width:64px;height:17px;background:#FFFFFF;"></div><div style="left:278px;top:72px;width:200px;height:17px;background:#FFFFFF;"></div><div style="left:278px;top:72px;width:200px;height:17px;overflow:hidden"><div class="t" style="left:2px;top:2px;font-size:12px;line-height:12px;color:#000;transform:scaleX(0.88);transform-origin:0 0;">D_PERCENT</div></div><div style="left:479px;top:72px;width:95px;height:17px;background:#FFFFFF;"></div><div style="left:12px;top:89px;width:562px;height:1px;background:#C0C0C0;"></div><div style="left:212px;top:72px;width:1px;height:18px;background:#C0C0C0;"></div><div style="left:277px;top:72px;width:1px;height:18px;background:#C0C0C0;"></div><div style="left:478px;top:72px;width:1px;height:18px;background:#C0C0C0;"></div><div style="left:0px;top:90px;width:12px;height:18px;background:#ECE9D8;"></div><div style="left:0px;top:90px;width:11px;height:1px;background:#FFFFFF;"></div><div style="left:0px;top:90px;width:1px;height:17px;background:#FFFFFF;"></div><div style="left:11px;top:90px;width:1px;height:18px;background:#ACA899;"></div><div style="left:0px;top:107px;width:12px;height:1px;background:#ACA899;"></div><div style="left:12px;top:90px;width:200px;height:17px;background:#FFFFE1;"></div><div style="left:12px;top:90px;width:200px;height:17px;overflow:hidden"><div class="t" style="left:2px;top:2px;font-size:12px;line-height:12px;color:#000;transform:scaleX(0.88);transform-origin:0 0;">MFD_CITY</div></div><div style="left:213px;top:90px;width:64px;height:17px;background:#FFFFFF;"></div><div style="left:278px;top:90px;width:200px;height:17px;background:#FFFFFF;"></div><div style="left:278px;top:90px;width:200px;height:17px;overflow:hidden"><div class="t" style="left:2px;top:2px;font-size:12px;line-height:12px;color:#000;transform:scaleX(0.88);transform-origin:0 0;">D_CITY</div></div><div style="left:479px;top:90px;width:95px;height:17px;background:#FFFFFF;"></div><div style="left:12px;top:107px;width:562px;height:1px;background:#C0C0C0;"></div><div style="left:212px;top:90px;width:1px;height:18px;background:#C0C0C0;"></div><div style="left:277px;top:90px;width:1px;height:18px;background:#C0C0C0;"></div><div style="left:478px;top:90px;width:1px;height:18px;background:#C0C0C0;"></div><div style="left:0px;top:108px;width:12px;height:18px;background:#ECE9D8;"></div><div style="left:0px;top:108px;width:11px;height:1px;background:#FFFFFF;"></div><div style="left:0px;top:108px;width:1px;height:17px;background:#FFFFFF;"></div><div style="left:11px;top:108px;width:1px;height:18px;background:#ACA899;"></div><div style="left:0px;top:125px;width:12px;height:1px;background:#ACA899;"></div><div style="left:12px;top:108px;width:200px;height:17px;background:#FFFFE1;"></div><div style="left:12px;top:108px;width:200px;height:17px;overflow:hidden"><div class="t" style="left:2px;top:2px;font-size:12px;line-height:12px;color:#000;transform:scaleX(0.88);transform-origin:0 0;">MFD_COMPANYID</div></div><div style="left:213px;top:108px;width:64px;height:17px;background:#FFFFFF;"></div><div style="left:278px;top:108px;width:200px;height:17px;background:#FFFFFF;"></div><div style="left:278px;top:108px;width:200px;height:17px;overflow:hidden"><div class="t" style="left:2px;top:2px;font-size:12px;line-height:12px;color:#000;transform:scaleX(0.88);transform-origin:0 0;">D_COMPANYID</div></div><div style="left:479px;top:108px;width:95px;height:17px;background:#FFFFFF;"></div><div style="left:12px;top:125px;width:562px;height:1px;background:#C0C0C0;"></div><div style="left:212px;top:108px;width:1px;height:18px;background:#C0C0C0;"></div><div style="left:277px;top:108px;width:1px;height:18px;background:#C0C0C0;"></div><div style="left:478px;top:108px;width:1px;height:18px;background:#C0C0C0;"></div><div style="left:0px;top:126px;width:12px;height:18px;background:#ECE9D8;"></div><div style="left:0px;top:126px;width:11px;height:1px;background:#FFFFFF;"></div><div style="left:0px;top:126px;width:1px;height:17px;background:#FFFFFF;"></div><div style="left:11px;top:126px;width:1px;height:18px;background:#ACA899;"></div><div style="left:0px;top:143px;width:12px;height:1px;background:#ACA899;"></div><div style="left:12px;top:126px;width:200px;height:17px;background:#FFFFE1;"></div><div style="left:12px;top:126px;width:200px;height:17px;overflow:hidden"><div class="t" style="left:2px;top:2px;font-size:12px;line-height:12px;color:#000;transform:scaleX(0.88);transform-origin:0 0;">MFD_COUNTRY</div></div><div style="left:213px;top:126px;width:64px;height:17px;background:#FFFFFF;"></div><div style="left:278px;top:126px;width:200px;height:17px;background:#FFFFFF;"></div><div style="left:278px;top:126px;width:200px;height:17px;overflow:hidden"><div class="t" style="left:2px;top:2px;font-size:12px;line-height:12px;color:#000;transform:scaleX(0.88);transform-origin:0 0;">D_COUNTRY_NAME</div></div><div style="left:479px;top:126px;width:95px;height:17px;background:#FFFFFF;"></div><div style="left:12px;top:143px;width:562px;height:1px;background:#C0C0C0;"></div><div style="left:212px;top:126px;width:1px;height:18px;background:#C0C0C0;"></div><div style="left:277px;top:126px;width:1px;height:18px;background:#C0C0C0;"></div><div style="left:478px;top:126px;width:1px;height:18px;background:#C0C0C0;"></div><div style="left:0px;top:144px;width:12px;height:18px;background:#ECE9D8;"></div><div style="left:0px;top:144px;width:11px;height:1px;background:#FFFFFF;"></div><div style="left:0px;top:144px;width:1px;height:17px;background:#FFFFFF;"></div><div style="left:11px;top:144px;width:1px;height:18px;background:#ACA899;"></div><div style="left:0px;top:161px;width:12px;height:1px;background:#ACA899;"></div><div style="left:12px;top:144px;width:200px;height:17px;background:#FFFFE1;"></div><div style="left:12px;top:144px;width:200px;height:17px;overflow:hidden"><div class="t" style="left:2px;top:2px;font-size:12px;line-height:12px;color:#000;transform:scaleX(0.88);transform-origin:0 0;">MFD_ID</div></div><div style="left:213px;top:144px;width:64px;height:17px;background:#FFFFFF;"></div><div style="left:278px;top:144px;width:200px;height:17px;background:#FFFFFF;"></div><div style="left:278px;top:144px;width:200px;height:17px;overflow:hidden"><div class="t" style="left:2px;top:2px;font-size:12px;line-height:12px;color:#000;transform:scaleX(0.88);transform-origin:0 0;">D_IDENTITY_SMALL</div></div><div style="left:479px;top:144px;width:95px;height:17px;background:#FFFFFF;"></div><div style="left:12px;top:161px;width:562px;height:1px;background:#C0C0C0;"></div><div style="left:212px;top:144px;width:1px;height:18px;background:#C0C0C0;"></div><div style="left:277px;top:144px;width:1px;height:18px;background:#C0C0C0;"></div><div style="left:478px;top:144px;width:1px;height:18px;background:#C0C0C0;"></div><div style="left:0px;top:162px;width:12px;height:18px;background:#ECE9D8;"></div><div style="left:0px;top:162px;width:11px;height:1px;background:#FFFFFF;"></div><div style="left:0px;top:162px;width:1px;height:17px;background:#FFFFFF;"></div><div style="left:11px;top:162px;width:1px;height:18px;background:#ACA899;"></div><div style="left:0px;top:179px;width:12px;height:1px;background:#ACA899;"></div><div style="left:12px;top:162px;width:200px;height:17px;background:#FFFFE1;"></div><div style="left:12px;top:162px;width:200px;height:17px;overflow:hidden"><div class="t" style="left:2px;top:2px;font-size:12px;line-height:12px;color:#000;transform:scaleX(0.88);transform-origin:0 0;">MFD_IS_STARTED</div></div><div style="left:213px;top:162px;width:64px;height:17px;background:#FFFFFF;"></div><div style="left:278px;top:162px;width:200px;height:17px;background:#FFFFFF;"></div><div style="left:278px;top:162px;width:200px;height:17px;overflow:hidden"><div class="t" style="left:2px;top:2px;font-size:12px;line-height:12px;color:#000;transform:scaleX(0.88);transform-origin:0 0;">D_DATE</div></div><div style="left:479px;top:162px;width:95px;height:17px;background:#FFFFFF;"></div><div style="left:12px;top:179px;width:562px;height:1px;background:#C0C0C0;"></div><div style="left:212px;top:162px;width:1px;height:18px;background:#C0C0C0;"></div><div style="left:277px;top:162px;width:1px;height:18px;background:#C0C0C0;"></div><div style="left:478px;top:162px;width:1px;height:18px;background:#C0C0C0;"></div><div style="left:0px;top:180px;width:12px;height:18px;background:#ECE9D8;"></div><div style="left:0px;top:180px;width:11px;height:1px;background:#FFFFFF;"></div><div style="left:0px;top:180px;width:1px;height:17px;background:#FFFFFF;"></div><div style="left:11px;top:180px;width:1px;height:18px;background:#ACA899;"></div><div style="left:0px;top:197px;width:12px;height:1px;background:#ACA899;"></div><div style="left:12px;top:180px;width:200px;height:17px;background:#FFFFE1;"></div><div style="left:12px;top:180px;width:200px;height:17px;overflow:hidden"><div class="t" style="left:2px;top:2px;font-size:12px;line-height:12px;color:#000;transform:scaleX(0.88);transform-origin:0 0;">MFD_LIMIT_ACC_TRANSPORT</div></div><div style="left:213px;top:180px;width:64px;height:17px;background:#FFFFFF;"></div><div style="left:278px;top:180px;width:200px;height:17px;background:#FFFFFF;"></div><div style="left:278px;top:180px;width:200px;height:17px;overflow:hidden"><div class="t" style="left:2px;top:2px;font-size:12px;line-height:12px;color:#000;transform:scaleX(0.88);transform-origin:0 0;">D_MONEYNORMAL</div></div><div style="left:479px;top:180px;width:95px;height:17px;background:#FFFFFF;"></div><div style="left:12px;top:197px;width:562px;height:1px;background:#C0C0C0;"></div><div style="left:212px;top:180px;width:1px;height:18px;background:#C0C0C0;"></div><div style="left:277px;top:180px;width:1px;height:18px;background:#C0C0C0;"></div><div style="left:478px;top:180px;width:1px;height:18px;background:#C0C0C0;"></div><div style="left:0px;top:198px;width:12px;height:18px;background:#ECE9D8;"></div><div style="left:0px;top:198px;width:11px;height:1px;background:#FFFFFF;"></div><div style="left:0px;top:198px;width:1px;height:17px;background:#FFFFFF;"></div><div style="left:11px;top:198px;width:1px;height:18px;background:#ACA899;"></div><div style="left:0px;top:215px;width:12px;height:1px;background:#ACA899;"></div><div style="left:12px;top:198px;width:200px;height:17px;background:#FFFFE1;"></div><div style="left:12px;top:198px;width:200px;height:17px;overflow:hidden"><div class="t" style="left:2px;top:2px;font-size:12px;line-height:12px;color:#000;transform:scaleX(0.88);transform-origin:0 0;">MFD_LOGO</div></div><div style="left:213px;top:198px;width:64px;height:17px;background:#FFFFFF;"></div><div style="left:278px;top:198px;width:200px;height:17px;background:#FFFFFF;"></div><div style="left:278px;top:198px;width:200px;height:17px;overflow:hidden"><div class="t" style="left:2px;top:2px;font-size:12px;line-height:12px;color:#000;transform:scaleX(0.88);transform-origin:0 0;">D_BLOB_BIN_8192</div></div><div style="left:479px;top:198px;width:95px;height:17px;background:#FFFFFF;"></div><div class="t" style="left:571px;top:200px;font-size:12px;line-height:12px;color:#000;transform:scaleX(0.88);transform-origin:0 0;">2</div><div style="left:12px;top:215px;width:562px;height:1px;background:#C0C0C0;"></div><div style="left:212px;top:198px;width:1px;height:18px;background:#C0C0C0;"></div><div style="left:277px;top:198px;width:1px;height:18px;background:#C0C0C0;"></div><div style="left:478px;top:198px;width:1px;height:18px;background:#C0C0C0;"></div><div style="left:0px;top:216px;width:12px;height:18px;background:#ECE9D8;"></div><div style="left:0px;top:216px;width:11px;height:1px;background:#FFFFFF;"></div><div style="left:0px;top:216px;width:1px;height:17px;background:#FFFFFF;"></div><div style="left:11px;top:216px;width:1px;height:18px;background:#ACA899;"></div><div style="left:0px;top:233px;width:12px;height:1px;background:#ACA899;"></div><div style="left:12px;top:216px;width:200px;height:17px;background:#FFFFE1;"></div><div style="left:12px;top:216px;width:200px;height:17px;overflow:hidden"><div class="t" style="left:2px;top:2px;font-size:12px;line-height:12px;color:#000;transform:scaleX(0.88);transform-origin:0 0;">MFD_NAME</div></div><div style="left:213px;top:216px;width:64px;height:17px;background:#FFFFFF;"></div><div style="left:278px;top:216px;width:200px;height:17px;background:#FFFFFF;"></div><div style="left:278px;top:216px;width:200px;height:17px;overflow:hidden"><div class="t" style="left:2px;top:2px;font-size:12px;line-height:12px;color:#000;transform:scaleX(0.88);transform-origin:0 0;">D_NAME40</div></div><div style="left:479px;top:216px;width:95px;height:17px;background:#FFFFFF;"></div><div style="left:12px;top:233px;width:562px;height:1px;background:#C0C0C0;"></div><div style="left:212px;top:216px;width:1px;height:18px;background:#C0C0C0;"></div><div style="left:277px;top:216px;width:1px;height:18px;background:#C0C0C0;"></div><div style="left:478px;top:216px;width:1px;height:18px;background:#C0C0C0;"></div><div style="left:0px;top:234px;width:12px;height:18px;background:#ECE9D8;"></div><div style="left:0px;top:234px;width:11px;height:1px;background:#FFFFFF;"></div><div style="left:0px;top:234px;width:1px;height:17px;background:#FFFFFF;"></div><div style="left:11px;top:234px;width:1px;height:18px;background:#ACA899;"></div><div style="left:0px;top:251px;width:12px;height:1px;background:#ACA899;"></div><div style="left:12px;top:234px;width:200px;height:17px;background:#FFFFE1;"></div><div style="left:12px;top:234px;width:200px;height:17px;overflow:hidden"><div class="t" style="left:2px;top:2px;font-size:12px;line-height:12px;color:#000;transform:scaleX(0.88);transform-origin:0 0;">MFD_PHONE</div></div><div style="left:213px;top:234px;width:64px;height:17px;background:#FFFFFF;"></div><div style="left:278px;top:234px;width:200px;height:17px;background:#FFFFFF;"></div><div style="left:278px;top:234px;width:200px;height:17px;overflow:hidden"><div class="t" style="left:2px;top:2px;font-size:12px;line-height:12px;color:#000;transform:scaleX(0.88);transform-origin:0 0;">D_PHONE</div></div><div style="left:479px;top:234px;width:95px;height:17px;background:#FFFFFF;"></div><div style="left:12px;top:251px;width:562px;height:1px;background:#C0C0C0;"></div><div style="left:212px;top:234px;width:1px;height:18px;background:#C0C0C0;"></div><div style="left:277px;top:234px;width:1px;height:18px;background:#C0C0C0;"></div><div style="left:478px;top:234px;width:1px;height:18px;background:#C0C0C0;"></div><div style="left:0px;top:252px;width:12px;height:18px;background:#ECE9D8;"></div><div style="left:0px;top:252px;width:11px;height:1px;background:#FFFFFF;"></div><div style="left:0px;top:252px;width:1px;height:17px;background:#FFFFFF;"></div><div style="left:11px;top:252px;width:1px;height:18px;background:#ACA899;"></div><div style="left:0px;top:269px;width:12px;height:1px;background:#ACA899;"></div><div style="left:12px;top:252px;width:200px;height:17px;background:#FFFFE1;"></div><div style="left:12px;top:252px;width:200px;height:17px;overflow:hidden"><div class="t" style="left:2px;top:2px;font-size:12px;line-height:12px;color:#000;transform:scaleX(0.88);transform-origin:0 0;">MFD_REGISTRATION_TEXT</div></div><div style="left:213px;top:252px;width:64px;height:17px;background:#FFFFFF;"></div><div style="left:278px;top:252px;width:200px;height:17px;background:#FFFFFF;"></div><div style="left:278px;top:252px;width:200px;height:17px;overflow:hidden"><div class="t" style="left:2px;top:2px;font-size:12px;line-height:12px;color:#000;transform:scaleX(0.88);transform-origin:0 0;">D_DESCRIPTION_100</div></div><div style="left:479px;top:252px;width:95px;height:17px;background:#FFFFFF;"></div><div style="left:12px;top:269px;width:562px;height:1px;background:#C0C0C0;"></div><div style="left:212px;top:252px;width:1px;height:18px;background:#C0C0C0;"></div><div style="left:277px;top:252px;width:1px;height:18px;background:#C0C0C0;"></div><div style="left:478px;top:252px;width:1px;height:18px;background:#C0C0C0;"></div><div style="left:0px;top:270px;width:12px;height:18px;background:#ECE9D8;"></div><div style="left:0px;top:270px;width:11px;height:1px;background:#FFFFFF;"></div><div style="left:0px;top:270px;width:1px;height:17px;background:#FFFFFF;"></div><div style="left:11px;top:270px;width:1px;height:18px;background:#ACA899;"></div><div style="left:0px;top:287px;width:12px;height:1px;background:#ACA899;"></div><div style="left:12px;top:270px;width:200px;height:17px;background:#FFFFE1;"></div><div style="left:12px;top:270px;width:200px;height:17px;overflow:hidden"><div class="t" style="left:2px;top:2px;font-size:12px;line-height:12px;color:#000;transform:scaleX(0.88);transform-origin:0 0;">MFD_STREET</div></div><div style="left:213px;top:270px;width:64px;height:17px;background:#FFFFFF;"></div><div style="left:278px;top:270px;width:200px;height:17px;background:#FFFFFF;"></div><div style="left:278px;top:270px;width:200px;height:17px;overflow:hidden"><div class="t" style="left:2px;top:2px;font-size:12px;line-height:12px;color:#000;transform:scaleX(0.88);transform-origin:0 0;">D_STREET</div></div><div style="left:479px;top:270px;width:95px;height:17px;background:#FFFFFF;"></div><div style="left:12px;top:287px;width:562px;height:1px;background:#C0C0C0;"></div><div style="left:212px;top:270px;width:1px;height:18px;background:#C0C0C0;"></div><div style="left:277px;top:270px;width:1px;height:18px;background:#C0C0C0;"></div><div style="left:478px;top:270px;width:1px;height:18px;background:#C0C0C0;"></div><div style="left:0px;top:288px;width:12px;height:18px;background:#ECE9D8;"></div><div style="left:0px;top:288px;width:11px;height:1px;background:#FFFFFF;"></div><div style="left:0px;top:288px;width:1px;height:17px;background:#FFFFFF;"></div><div style="left:11px;top:288px;width:1px;height:18px;background:#ACA899;"></div><div style="left:0px;top:305px;width:12px;height:1px;background:#ACA899;"></div><div style="left:12px;top:288px;width:200px;height:17px;background:#FFFFE1;"></div><div style="left:12px;top:288px;width:200px;height:17px;overflow:hidden"><div class="t" style="left:2px;top:2px;font-size:12px;line-height:12px;color:#000;transform:scaleX(0.88);transform-origin:0 0;">MFD_SYS_UPD</div></div><div style="left:213px;top:288px;width:64px;height:17px;background:#FFFFFF;"></div><div style="left:278px;top:288px;width:200px;height:17px;background:#FFFFFF;"></div><div style="left:278px;top:288px;width:200px;height:17px;overflow:hidden"><div class="t" style="left:2px;top:2px;font-size:12px;line-height:12px;color:#000;transform:scaleX(0.88);transform-origin:0 0;">D_TIMESTAMP_UPDATED</div></div><div style="left:479px;top:288px;width:95px;height:17px;background:#FFFFFF;"></div><div style="left:12px;top:305px;width:562px;height:1px;background:#C0C0C0;"></div><div style="left:212px;top:288px;width:1px;height:18px;background:#C0C0C0;"></div><div style="left:277px;top:288px;width:1px;height:18px;background:#C0C0C0;"></div><div style="left:478px;top:288px;width:1px;height:18px;background:#C0C0C0;"></div><div style="left:0px;top:306px;width:12px;height:18px;background:#ECE9D8;"></div><div style="left:0px;top:306px;width:11px;height:1px;background:#FFFFFF;"></div><div style="left:0px;top:306px;width:1px;height:17px;background:#FFFFFF;"></div><div style="left:11px;top:306px;width:1px;height:18px;background:#ACA899;"></div><div style="left:0px;top:323px;width:12px;height:1px;background:#ACA899;"></div><div style="left:12px;top:306px;width:200px;height:17px;background:#FFFFE1;"></div><div style="left:12px;top:306px;width:200px;height:17px;overflow:hidden"><div class="t" style="left:2px;top:2px;font-size:12px;line-height:12px;color:#000;transform:scaleX(0.88);transform-origin:0 0;">MFD_TAXID</div></div><div style="left:213px;top:306px;width:64px;height:17px;background:#FFFFFF;"></div><div style="left:278px;top:306px;width:200px;height:17px;background:#FFFFFF;"></div><div style="left:278px;top:306px;width:200px;height:17px;overflow:hidden"><div class="t" style="left:2px;top:2px;font-size:12px;line-height:12px;color:#000;transform:scaleX(0.88);transform-origin:0 0;">D_TAXID</div></div><div style="left:479px;top:306px;width:95px;height:17px;background:#FFFFFF;"></div><div style="left:12px;top:323px;width:562px;height:1px;background:#C0C0C0;"></div><div style="left:212px;top:306px;width:1px;height:18px;background:#C0C0C0;"></div><div style="left:277px;top:306px;width:1px;height:18px;background:#C0C0C0;"></div><div style="left:478px;top:306px;width:1px;height:18px;background:#C0C0C0;"></div><div style="left:0px;top:324px;width:12px;height:18px;background:#ECE9D8;"></div><div style="left:0px;top:324px;width:11px;height:1px;background:#FFFFFF;"></div><div style="left:0px;top:324px;width:1px;height:17px;background:#FFFFFF;"></div><div style="left:11px;top:324px;width:1px;height:18px;background:#ACA899;"></div><div style="left:0px;top:341px;width:12px;height:1px;background:#ACA899;"></div><div style="left:12px;top:324px;width:200px;height:17px;background:#FFFFE1;"></div><div style="left:12px;top:324px;width:200px;height:17px;overflow:hidden"><div class="t" style="left:2px;top:2px;font-size:12px;line-height:12px;color:#000;transform:scaleX(0.88);transform-origin:0 0;">MFD_VALID_FROM</div></div><div style="left:213px;top:324px;width:64px;height:17px;background:#FFFFFF;"></div><div style="left:278px;top:324px;width:200px;height:17px;background:#FFFFFF;"></div><div style="left:278px;top:324px;width:200px;height:17px;overflow:hidden"><div class="t" style="left:2px;top:2px;font-size:12px;line-height:12px;color:#000;transform:scaleX(0.88);transform-origin:0 0;">D_DATE</div></div><div style="left:479px;top:324px;width:95px;height:17px;background:#FFFFFF;"></div><div style="left:12px;top:341px;width:562px;height:1px;background:#C0C0C0;"></div><div style="left:212px;top:324px;width:1px;height:18px;background:#C0C0C0;"></div><div style="left:277px;top:324px;width:1px;height:18px;background:#C0C0C0;"></div><div style="left:478px;top:324px;width:1px;height:18px;background:#C0C0C0;"></div></div><div style="left:1383px;top:408px;width:17px;height:359px;background:linear-gradient(90deg,#F1EFE8,#FEFEFB)"></div><div style="left:1384px;top:408px;width:13px;height:14px;border:1px solid #FFFFFF;border-radius:2px;background:linear-gradient(135deg,#D3DFFD 0%,#C4D5FB 45%,#B3C8F5 100%)"></div><div style="left:1386px;top:424px;width:13px;height:1px;background:#A2B7E8;"></div><div style="left:1399px;top:410px;width:1px;height:14px;background:#B9CAF0;"></div><svg style="position:absolute;left:0;top:0;overflow:visible" width="1" height="1"><path d="M1387.2 418.3 L1391.5 414.0 L1395.8 418.3" stroke="#4D6185" stroke-width="2.0" fill="none"/></svg><div style="left:1384px;top:750px;width:13px;height:14px;border:1px solid #FFFFFF;border-radius:2px;background:linear-gradient(135deg,#D3DFFD 0%,#C4D5FB 45%,#B3C8F5 100%)"></div><div style="left:1386px;top:766px;width:13px;height:1px;background:#A2B7E8;"></div><div style="left:1399px;top:752px;width:1px;height:14px;background:#B9CAF0;"></div><svg style="position:absolute;left:0;top:0;overflow:visible" width="1" height="1"><path d="M1387.2 755.7 L1391.5 760.0 L1395.8 755.7" stroke="#4D6185" stroke-width="2.0" fill="none"/></svg><div style="left:1384px;top:425px;width:13px;height:124px;border:1px solid #FFFFFF;border-radius:2px;background:linear-gradient(90deg,#CADAFD,#BED2FA)"></div><div style="left:1386px;top:551px;width:13px;height:1px;background:#A2B7E8;"></div><div style="left:1399px;top:427px;width:1px;height:124px;background:#B9CAF0;"></div><div style="left:1388px;top:484px;width:6px;height:1px;background:#EEF3FE;"></div><div style="left:1389px;top:485px;width:6px;height:1px;background:#8CA9E8;"></div><div style="left:1388px;top:486px;width:6px;height:1px;background:#EEF3FE;"></div><div style="left:1389px;top:487px;width:6px;height:1px;background:#8CA9E8;"></div><div style="left:1388px;top:488px;width:6px;height:1px;background:#EEF3FE;"></div><div style="left:1389px;top:489px;width:6px;height:1px;background:#8CA9E8;"></div><div style="left:1388px;top:490px;width:6px;height:1px;background:#EEF3FE;"></div><div style="left:1389px;top:491px;width:6px;height:1px;background:#8CA9E8;"></div><div style="left:809px;top:767px;width:574px;height:17px;background:linear-gradient(180deg,#F1EFE8,#FEFEFB)"></div><div style="left:809px;top:768px;width:14px;height:13px;border:1px solid #FFFFFF;border-radius:2px;background:linear-gradient(135deg,#D3DFFD 0%,#C4D5FB 45%,#B3C8F5 100%)"></div><div style="left:811px;top:783px;width:14px;height:1px;background:#A2B7E8;"></div><div style="left:825px;top:770px;width:1px;height:13px;background:#B9CAF0;"></div><svg style="position:absolute;left:0;top:0;overflow:visible" width="1" height="1"><path d="M819.3 771.2 L815.0 775.5 L819.3 779.8" stroke="#4D6185" stroke-width="2.0" fill="none"/></svg><div style="left:1366px;top:768px;width:14px;height:13px;border:1px solid #FFFFFF;border-radius:2px;background:linear-gradient(135deg,#D3DFFD 0%,#C4D5FB 45%,#B3C8F5 100%)"></div><div style="left:1368px;top:783px;width:14px;height:1px;background:#A2B7E8;"></div><div style="left:1382px;top:770px;width:1px;height:13px;background:#B9CAF0;"></div><svg style="position:absolute;left:0;top:0;overflow:visible" width="1" height="1"><path d="M1371.7 771.2 L1376.0 775.5 L1371.7 779.8" stroke="#4D6185" stroke-width="2.0" fill="none"/></svg><div style="left:826px;top:768px;width:14px;height:13px;border:1px solid #FFFFFF;border-radius:2px;background:linear-gradient(180deg,#CADAFD,#BED2FA)"></div><div style="left:828px;top:783px;width:14px;height:1px;background:#A2B7E8;"></div><div style="left:842px;top:770px;width:1px;height:13px;background:#B9CAF0;"></div><div style="left:829px;top:772px;width:1px;height:6px;background:#EEF3FE;"></div><div style="left:830px;top:773px;width:1px;height:6px;background:#8CA9E8;"></div><div style="left:831px;top:772px;width:1px;height:6px;background:#EEF3FE;"></div><div style="left:832px;top:773px;width:1px;height:6px;background:#8CA9E8;"></div><div style="left:833px;top:772px;width:1px;height:6px;background:#EEF3FE;"></div><div style="left:834px;top:773px;width:1px;height:6px;background:#8CA9E8;"></div><div style="left:835px;top:772px;width:1px;height:6px;background:#EEF3FE;"></div><div style="left:836px;top:773px;width:1px;height:6px;background:#8CA9E8;"></div><div style="left:1383px;top:767px;width:17px;height:17px;background:#ECE9D8;"></div><div style="left:11px;top:791px;width:785px;height:40px;background:#FFFFFF;"></div><div style="left:11px;top:791px;width:784px;height:1px;background:#ACA899;"></div><div style="left:11px;top:791px;width:1px;height:39px;background:#ACA899;"></div><div style="left:12px;top:792px;width:782px;height:1px;background:#716F64;"></div><div style="left:12px;top:792px;width:1px;height:37px;background:#716F64;"></div><div style="left:794px;top:792px;width:1px;height:38px;background:#F1EFE2;"></div><div style="left:12px;top:829px;width:783px;height:1px;background:#F1EFE2;"></div><div style="left:795px;top:791px;width:1px;height:40px;background:#FFFFFF;"></div><div style="left:11px;top:830px;width:785px;height:1px;background:#FFFFFF;"></div><div class="t" style="left:14.5px;top:797px;font-size:13px;line-height:13px;color:#000;">celkovy pocet kusu</div><div style="left:807px;top:791px;width:595px;height:40px;background:#FFFFFF;"></div><div style="left:807px;top:791px;width:594px;height:1px;background:#ACA899;"></div><div style="left:807px;top:791px;width:1px;height:39px;background:#ACA899;"></div><div style="left:808px;top:792px;width:592px;height:1px;background:#716F64;"></div><div style="left:808px;top:792px;width:1px;height:37px;background:#716F64;"></div><div style="left:1400px;top:792px;width:1px;height:38px;background:#F1EFE2;"></div><div style="left:808px;top:829px;width:593px;height:1px;background:#F1EFE2;"></div><div style="left:1401px;top:791px;width:1px;height:40px;background:#FFFFFF;"></div><div style="left:807px;top:830px;width:595px;height:1px;background:#FFFFFF;"></div><div style="left:8px;top:839px;width:1396px;height:1px;background:#ACA899;"></div><div style="left:8px;top:839px;width:1px;height:41px;background:#ACA899;"></div><div style="left:9px;top:840px;width:1396px;height:1px;background:#FFFFFF;"></div><div style="left:9px;top:840px;width:1px;height:41px;background:#FFFFFF;"></div><div style="left:1403px;top:839px;width:1px;height:41px;background:#ACA899;"></div><div style="left:8px;top:879px;width:1396px;height:1px;background:#ACA899;"></div><div style="left:1404px;top:839px;width:1px;height:42px;background:#FFFFFF;"></div><div style="left:8px;top:880px;width:1397px;height:1px;background:#FFFFFF;"></div><div style="left:16px;top:850px;width:184px;height:25px;background:#000;"></div><div style="left:17px;top:851px;width:182px;height:23px;background:#ECE9D8;"></div><div style="left:17px;top:851px;width:181px;height:1px;background:#FFFFFF;"></div><div style="left:17px;top:851px;width:1px;height:22px;background:#FFFFFF;"></div><div style="left:198px;top:851px;width:1px;height:23px;background:#716F64;"></div><div style="left:17px;top:873px;width:182px;height:1px;background:#716F64;"></div><div style="left:197px;top:852px;width:1px;height:21px;background:#ACA899;"></div><div style="left:18px;top:872px;width:180px;height:1px;background:#ACA899;"></div><div style="left:20px;top:854px;width:174px;height:15px;border:1px dotted #000;border-radius:2px"></div><div class="t" style="left:17px;top:856px;width:184px;text-align:center;font-size:12px;line-height:12px"><span style="display:inline-block;transform:scaleX(0.89)">Match tables together with fields</span></div><div style="left:200px;top:850px;width:185px;height:25px;background:#ECE9D8;"></div><div style="left:200px;top:850px;width:184px;height:1px;background:#FFFFFF;"></div><div style="left:200px;top:850px;width:1px;height:24px;background:#FFFFFF;"></div><div style="left:384px;top:850px;width:1px;height:25px;background:#716F64;"></div><div style="left:200px;top:874px;width:185px;height:1px;background:#716F64;"></div><div style="left:383px;top:851px;width:1px;height:23px;background:#ACA899;"></div><div style="left:201px;top:873px;width:183px;height:1px;background:#ACA899;"></div><div class="t" style="left:201px;top:856px;width:185px;text-align:center;font-size:12px;line-height:12px"><span style="display:inline-block;transform:scaleX(0.89)">Unmatch tables together with fields</span></div><div style="left:392px;top:850px;width:95px;height:25px;background:#ECE9D8;"></div><div style="left:392px;top:850px;width:94px;height:1px;background:#FFFFFF;"></div><div style="left:392px;top:850px;width:1px;height:24px;background:#FFFFFF;"></div><div style="left:486px;top:850px;width:1px;height:25px;background:#716F64;"></div><div style="left:392px;top:874px;width:95px;height:1px;background:#716F64;"></div><div style="left:485px;top:851px;width:1px;height:23px;background:#ACA899;"></div><div style="left:393px;top:873px;width:93px;height:1px;background:#ACA899;"></div><div class="t" style="left:393px;top:856px;width:95px;text-align:center;font-size:12px;line-height:12px"><span style="display:inline-block;transform:scaleX(0.89)">Match tables</span></div><div style="left:496px;top:850px;width:94px;height:25px;background:#ECE9D8;"></div><div style="left:496px;top:850px;width:93px;height:1px;background:#FFFFFF;"></div><div style="left:496px;top:850px;width:1px;height:24px;background:#FFFFFF;"></div><div style="left:589px;top:850px;width:1px;height:25px;background:#716F64;"></div><div style="left:496px;top:874px;width:94px;height:1px;background:#716F64;"></div><div style="left:588px;top:851px;width:1px;height:23px;background:#ACA899;"></div><div style="left:497px;top:873px;width:92px;height:1px;background:#ACA899;"></div><div class="t" style="left:497px;top:856px;width:94px;text-align:center;font-size:12px;line-height:12px"><span style="display:inline-block;transform:scaleX(0.89)">Unmatch tables</span></div><div style="left:600px;top:850px;width:93px;height:25px;background:#ECE9D8;"></div><div style="left:600px;top:850px;width:92px;height:1px;background:#FFFFFF;"></div><div style="left:600px;top:850px;width:1px;height:24px;background:#FFFFFF;"></div><div style="left:692px;top:850px;width:1px;height:25px;background:#716F64;"></div><div style="left:600px;top:874px;width:93px;height:1px;background:#716F64;"></div><div style="left:691px;top:851px;width:1px;height:23px;background:#ACA899;"></div><div style="left:601px;top:873px;width:91px;height:1px;background:#ACA899;"></div><div class="t" style="left:601px;top:856px;width:93px;text-align:center;font-size:12px;line-height:12px"><span style="display:inline-block;transform:scaleX(0.89)">Match fields</span></div><div style="left:696px;top:850px;width:107px;height:25px;background:#ECE9D8;"></div><div style="left:696px;top:850px;width:106px;height:1px;background:#FFFFFF;"></div><div style="left:696px;top:850px;width:1px;height:24px;background:#FFFFFF;"></div><div style="left:802px;top:850px;width:1px;height:25px;background:#716F64;"></div><div style="left:696px;top:874px;width:107px;height:1px;background:#716F64;"></div><div style="left:801px;top:851px;width:1px;height:23px;background:#ACA899;"></div><div style="left:697px;top:873px;width:105px;height:1px;background:#ACA899;"></div><div class="t" style="left:697px;top:856px;width:107px;text-align:center;font-size:12px;line-height:12px"><span style="display:inline-block;transform:scaleX(0.89)">Unmatch fields</span></div><div style="left:339px;top:54px;width:3px;height:198px;background:linear-gradient(90deg,rgba(0,0,0,0.42),rgba(0,0,0,0.22) 40%,rgba(0,0,0,0.05))"></div><div style="left:82px;top:252px;width:257px;height:3px;background:linear-gradient(180deg,rgba(0,0,0,0.42),rgba(0,0,0,0.22) 40%,rgba(0,0,0,0.05))"></div><div style="left:339px;top:252px;width:3px;height:3px;background:radial-gradient(circle at 0 0,rgba(0,0,0,0.4),rgba(0,0,0,0.05) 80%)"></div><div style="left:77px;top:49px;width:262px;height:203px;background:#FFFFFF;"></div><div style="left:77px;top:49px;width:261px;height:1px;background:#ECE9D8;"></div><div style="left:77px;top:49px;width:1px;height:202px;background:#ECE9D8;"></div><div style="left:79px;top:51px;width:257px;height:1px;background:#F1EFE4;"></div><div style="left:79px;top:51px;width:1px;height:198px;background:#F1EFE4;"></div><div style="left:336px;top:50px;width:1px;height:200px;background:#E6E3D4;"></div><div style="left:78px;top:249px;width:259px;height:1px;background:#E6E3D4;"></div><div style="left:337px;top:49px;width:1px;height:202px;background:#ACA899;"></div><div style="left:77px;top:250px;width:261px;height:1px;background:#ACA899;"></div><div style="left:338px;top:49px;width:1px;height:203px;background:#716F64;"></div><div style="left:77px;top:251px;width:262px;height:1px;background:#716F64;"></div><div class="t" style="left:96px;top:54px;font-size:12px;line-height:12px;color:#000;transform:scaleX(0.915);transform-origin:0 0;">Match tables together with fields</div><div class="t" style="left:275px;top:54px;font-size:12px;line-height:12px;color:#000;transform:scaleX(0.915);transform-origin:0 0;">F5</div><div class="t" style="left:96px;top:71px;font-size:12px;line-height:12px;color:#000;transform:scaleX(0.915);transform-origin:0 0;">Unmatch tables together with fields</div><div class="t" style="left:275px;top:71px;font-size:12px;line-height:12px;color:#000;transform:scaleX(0.915);transform-origin:0 0;">F6</div><div class="t" style="left:96px;top:88px;font-size:12px;line-height:12px;color:#000;transform:scaleX(0.915);transform-origin:0 0;">Match tables</div><div class="t" style="left:275px;top:88px;font-size:12px;line-height:12px;color:#000;transform:scaleX(0.915);transform-origin:0 0;">F7</div><div class="t" style="left:96px;top:105px;font-size:12px;line-height:12px;color:#000;transform:scaleX(0.915);transform-origin:0 0;">Unmatch tables</div><div class="t" style="left:275px;top:105px;font-size:12px;line-height:12px;color:#000;transform:scaleX(0.915);transform-origin:0 0;">F8</div><div class="t" style="left:96px;top:122px;font-size:12px;line-height:12px;color:#000;transform:scaleX(0.915);transform-origin:0 0;">Match fields</div><div class="t" style="left:275px;top:122px;font-size:12px;line-height:12px;color:#000;transform:scaleX(0.915);transform-origin:0 0;">F9</div><div class="t" style="left:96px;top:139px;font-size:12px;line-height:12px;color:#000;transform:scaleX(0.915);transform-origin:0 0;">Unmatch fields</div><div class="t" style="left:275px;top:139px;font-size:12px;line-height:12px;color:#000;transform:scaleX(0.915);transform-origin:0 0;">F10</div><div class="t" style="left:96px;top:165px;font-size:12px;line-height:12px;color:#000;transform:scaleX(0.915);transform-origin:0 0;">Matched tables ?</div><div class="t" style="left:275px;top:165px;font-size:12px;line-height:12px;color:#000;transform:scaleX(0.915);transform-origin:0 0;">Shift+F1</div><div class="t" style="left:96px;top:182px;font-size:12px;line-height:12px;color:#000;transform:scaleX(0.915);transform-origin:0 0;">Matched fields ?</div><div class="t" style="left:275px;top:182px;font-size:12px;line-height:12px;color:#000;transform:scaleX(0.915);transform-origin:0 0;">Shift+F2</div><div class="t" style="left:96px;top:208px;font-size:12px;line-height:12px;color:#000;transform:scaleX(0.915);transform-origin:0 0;">Copy descriptions</div><div class="t" style="left:275px;top:208px;font-size:12px;line-height:12px;color:#000;transform:scaleX(0.915);transform-origin:0 0;">F12</div><div class="t" style="left:96px;top:234px;font-size:12px;line-height:12px;color:#000;transform:scaleX(0.915);transform-origin:0 0;">Check matching</div><div class="t" style="left:275px;top:234px;font-size:12px;line-height:12px;color:#000;transform:scaleX(0.915);transform-origin:0 0;">Ctrl+C</div><div style="left:81px;top:157px;width:254px;height:1px;background:#C5C2B2;"></div><div style="left:81px;top:200px;width:254px;height:1px;background:#C5C2B2;"></div><div style="left:81px;top:226px;width:254px;height:1px;background:#C5C2B2;"></div>
</div>
</body></html>
